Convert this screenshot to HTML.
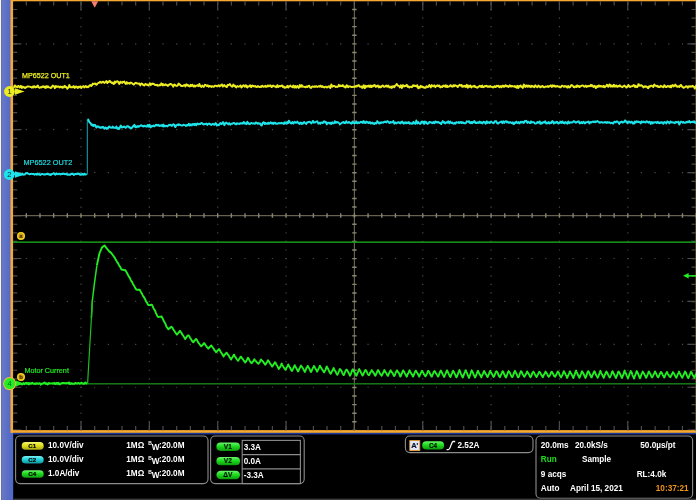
<!DOCTYPE html>
<html><head><meta charset="utf-8"><title>Oscilloscope</title>
<style>
html,body{margin:0;padding:0;background:#000;}
body{width:696px;height:500px;overflow:hidden;position:relative;font-family:"Liberation Sans",sans-serif;}
svg{position:absolute;left:0;top:0;display:block}
text{font-family:"Liberation Sans",sans-serif;}
.b{font-weight:bold;font-size:8.2px;fill:#fff}
</style></head>
<body>
<svg width="696" height="500" viewBox="0 0 696 500">
<defs>
<linearGradient id="blu" x1="0" x2="1" y1="0" y2="0"><stop offset="0" stop-color="#6a7ac6"/><stop offset="0.5" stop-color="#5a6ec4"/><stop offset="1" stop-color="#4f68c8"/></linearGradient>
<linearGradient id="gy" x1="0" x2="0" y1="0" y2="1"><stop offset="0" stop-color="#f4f46a"/><stop offset="0.45" stop-color="#dede1c"/><stop offset="1" stop-color="#a8a810"/></linearGradient>
<linearGradient id="gc" x1="0" x2="0" y1="0" y2="1"><stop offset="0" stop-color="#7cf0f4"/><stop offset="0.45" stop-color="#22d4dc"/><stop offset="1" stop-color="#10949c"/></linearGradient>
<linearGradient id="gg" x1="0" x2="0" y1="0" y2="1"><stop offset="0" stop-color="#6cf46c"/><stop offset="0.45" stop-color="#1edc1e"/><stop offset="1" stop-color="#0e9a0e"/></linearGradient>
<filter id="soft" filterUnits="userSpaceOnUse" x="-10" y="-10" width="716" height="520"><feGaussianBlur stdDeviation="0.35"/></filter>
<radialGradient id="cm"><stop offset="0" stop-color="#c08410"/><stop offset="0.55" stop-color="#d8a018"/><stop offset="0.8" stop-color="#f2d622"/><stop offset="1" stop-color="#f2d622"/></radialGradient>
</defs>
<g filter="url(#soft)">
<rect x="-6" y="-6" width="708" height="512" fill="#000"/>
<!-- left band -->
<rect x="-6" y="-6" width="7.4" height="512" fill="#f4f4fa"/>
<rect x="1.4" y="-6" width="11.8" height="512" fill="url(#blu)"/>
<!-- plot frame -->
<rect x="10.5" y="-6" width="692" height="438.9" fill="#f6a832"/>
<rect x="13.1" y="1.3" width="689" height="428.8" fill="#000"/>
<rect x="695" y="1.3" width="7" height="428.9" fill="#4a3208"/>
<rect x="13.2" y="432.9" width="689" height="1.5" fill="#1c3aa0"/>
<g stroke="#4a4a4a" stroke-width="1.2"><line x1="81" y1="8.89" x2="81" y2="430" stroke-dasharray="1.2 7.39"/><line x1="149.35" y1="8.89" x2="149.35" y2="430" stroke-dasharray="1.2 7.39"/><line x1="217.7" y1="8.89" x2="217.7" y2="430" stroke-dasharray="1.2 7.39"/><line x1="286.05" y1="8.89" x2="286.05" y2="430" stroke-dasharray="1.2 7.39"/><line x1="422.75" y1="8.89" x2="422.75" y2="430" stroke-dasharray="1.2 7.39"/><line x1="491.1" y1="8.89" x2="491.1" y2="430" stroke-dasharray="1.2 7.39"/><line x1="559.45" y1="8.89" x2="559.45" y2="430" stroke-dasharray="1.2 7.39"/><line x1="627.8" y1="8.89" x2="627.8" y2="430" stroke-dasharray="1.2 7.39"/><line x1="25.72" y1="43.83" x2="696" y2="43.83" stroke-dasharray="1.2 12.47"/><line x1="25.72" y1="86.76" x2="696" y2="86.76" stroke-dasharray="1.2 12.47"/><line x1="25.72" y1="129.69" x2="696" y2="129.69" stroke-dasharray="1.2 12.47"/><line x1="25.72" y1="172.62" x2="696" y2="172.62" stroke-dasharray="1.2 12.47"/><line x1="25.72" y1="258.48" x2="696" y2="258.48" stroke-dasharray="1.2 12.47"/><line x1="25.72" y1="301.41" x2="696" y2="301.41" stroke-dasharray="1.2 12.47"/><line x1="25.72" y1="344.34" x2="696" y2="344.34" stroke-dasharray="1.2 12.47"/><line x1="25.72" y1="387.27" x2="696" y2="387.27" stroke-dasharray="1.2 12.47"/></g>
<g stroke="#4c4c4e"><line x1="25.72" y1="3.4" x2="696" y2="3.4" stroke-width="4.4" stroke-dasharray="1.2 12.47"/><line x1="25.72" y1="428.1" x2="696" y2="428.1" stroke-width="4.4" stroke-dasharray="1.2 12.47"/><line x1="80.4" y1="5.9" x2="696" y2="5.9" stroke-width="9.4" stroke-dasharray="1.2 67.15"/><line x1="80.4" y1="425.6" x2="696" y2="425.6" stroke-width="9.4" stroke-dasharray="1.2 67.15"/><line x1="15.1" y1="8.89" x2="15.1" y2="430" stroke-width="4.2" stroke-dasharray="1.2 7.39"/><line x1="693.8" y1="8.89" x2="693.8" y2="430" stroke-width="4.4" stroke-dasharray="1.2 7.39"/><line x1="17.2" y1="43.23" x2="17.2" y2="430" stroke-width="8.4" stroke-dasharray="1.2 41.73"/><line x1="691.7" y1="43.23" x2="691.7" y2="430" stroke-width="8.6" stroke-dasharray="1.2 41.73"/></g>
<g stroke="#66624f"><line x1="13" y1="215.55" x2="696" y2="215.55" stroke-width="1.2"/><line x1="354.4" y1="1" x2="354.4" y2="430.3" stroke-width="1.2"/><line x1="25.62" y1="215.55" x2="696" y2="215.55" stroke="#8a8672" stroke-width="4.4" stroke-dasharray="1.4 12.27"/><line x1="354.4" y1="8.79" x2="354.4" y2="430" stroke="#8a8672" stroke-width="4.4" stroke-dasharray="1.4 7.19"/></g>
<rect x="13" y="241.4" width="689" height="1.5" fill="#189a1b"/>
<rect x="13" y="383.1" width="689" height="1.4" fill="#14801a"/>
<polyline fill="none" stroke="#ecec22" stroke-width="1.9" stroke-linejoin="round" points="13.3,87.8 13.8,87.6 14.3,86.5 14.8,85.4 15.3,85.6 15.8,86.7 16.3,86.5 16.8,86.8 17.3,87.3 17.8,86.6 18.3,85.9 18.8,86.2 19.3,87 19.8,87.5 20.3,86.5 20.8,85.7 21.3,86.7 21.8,88 22.3,87.7 22.8,86.6 23.3,87.1 23.8,87.3 24.3,87.1 24.8,88 25.3,88 25.8,87.2 26.3,87.3 26.8,86.9 27.3,86.5 27.8,86.5 28.3,86.5 28.8,86.6 29.3,86.6 29.8,86.6 30.3,86.8 30.8,87 31.3,87.1 31.8,87.7 32.3,86.8 32.8,86.8 33.3,87.4 33.8,86.2 34.3,86.2 34.8,86.9 35.3,87.5 35.8,86.9 36.3,86.5 36.8,87.1 37.3,86.1 37.8,85.5 38.3,86.6 38.8,87.5 39.3,87.8 39.8,87.7 40.3,87.4 40.8,87.2 41.3,87.5 41.8,87.1 42.3,86.4 42.8,87 43.3,86.3 43.8,86.8 44.3,87.2 44.8,86.5 45.3,87.9 45.8,87.5 46.3,86.2 46.8,87.4 47.3,87.1 47.8,86.2 48.3,86.9 48.8,87.4 49.3,87.4 49.8,87.4 50.3,87.7 50.8,88.1 51.3,87.7 51.8,86.9 52.3,86.2 52.8,85.6 53.3,86.3 53.8,86.3 54.3,86.4 54.8,88.2 55.3,87.3 55.8,86 56.3,86.3 56.8,87.1 57.3,86.9 57.8,86.4 58.3,86.6 58.8,86.5 59.3,87.4 59.8,87.1 60.3,86.5 60.8,87.1 61.3,87.5 61.8,86.7 62.3,86.8 62.8,87.7 63.3,87.5 63.8,87.4 64.3,86.1 64.8,85.8 65.3,87 65.8,87.3 66.3,86.9 66.8,87.7 67.3,88.8 67.8,88 68.3,87.8 68.8,86.9 69.3,84.9 69.8,86.3 70.3,87.2 70.8,87.1 71.3,87.4 71.8,87.1 72.3,87.2 72.8,87.3 73.3,86.2 73.8,86.3 74.3,87.1 74.8,87.9 75.3,87.2 75.8,86.4 76.3,86.7 76.8,86.6 77.3,87.6 77.8,87.9 78.3,86.9 78.8,86.7 79.3,87.3 79.8,86.8 80.3,86.3 80.8,87.5 81.3,88.1 81.8,87.3 82.3,86.6 82.8,86.6 83.3,86.1 83.8,86.6 84.3,87.5 84.8,87.1 85.3,86.3 85.8,85.9 86.3,86.8 86.8,87.3 87.3,86.7 87.8,86.7 88.3,87.2 88.8,86.5 89.3,85.6 89.8,85.4 90.3,84.9 90.8,85.5 91.3,86 91.8,85.6 92.3,84.5 92.8,83.6 93.3,83.9 93.8,84 94.3,83.9 94.8,83.5 95.3,83.5 95.8,84.5 96.3,84.8 96.8,84.6 97.3,83.7 97.8,83.3 98.3,82.9 98.8,82.8 99.3,82.7 99.8,81.9 100.3,81.8 100.8,82.3 101.3,82.8 101.8,82.6 102.3,81.9 102.8,81.9 103.3,81.7 103.8,82.4 104.3,83 104.8,82.4 105.3,82.4 105.8,81.6 106.3,81 106.8,81.7 107.3,83.1 107.8,82.6 108.3,81.5 108.8,82.1 109.3,81.6 109.8,80.8 110.3,81.4 110.8,82.2 111.3,82.3 111.8,83 112.3,83.2 112.8,82.6 113.3,83.5 113.8,84.1 114.3,82.6 114.8,81.6 115.3,82.9 115.8,82.4 116.3,81.4 116.8,81.5 117.3,81.3 117.8,81.4 118.3,82.1 118.8,83.3 119.3,84 119.8,83.3 120.3,81.7 120.8,81.7 121.3,82.5 121.8,82.7 122.3,82.9 122.8,81.8 123.3,82.1 123.8,82 124.3,81.5 124.8,82.7 125.3,83.3 125.8,83.9 126.3,82.6 126.8,82.1 127.3,83.6 127.8,83.3 128.3,83.3 128.8,82.9 129.3,83 129.8,83.8 130.3,83.1 130.8,82.5 131.3,82.9 131.8,83 132.3,83.6 132.8,84 133.3,84.2 133.8,84.7 134.3,84.1 134.8,83.5 135.3,83 135.8,82.8 136.3,82.9 136.8,83.5 137.3,83.5 137.8,83.4 138.3,83.9 138.8,83.7 139.3,83.5 139.8,84.5 140.3,85.4 140.8,84.3 141.3,83.5 141.8,83.7 142.3,83.7 142.8,84.7 143.3,85.1 143.8,85 144.3,85.6 144.8,84.8 145.3,83.9 145.8,84.1 146.3,84.7 146.8,84.7 147.3,84.5 147.8,85.2 148.3,85.5 148.8,85.1 149.3,84.2 149.8,83.2 150.3,84.2 150.8,85.2 151.3,84.2 151.8,83.8 152.3,84 152.8,83.5 153.3,83.9 153.8,84.3 154.3,84.1 154.8,84.9 155.3,85 155.8,84.9 156.3,85.2 156.8,85 157.3,84.8 157.8,85.7 158.3,85.6 158.8,85.6 159.3,85.2 159.8,84.8 160.3,85.3 160.8,84.6 161.3,83.3 161.8,84.4 162.3,85.2 162.8,83.9 163.3,84.6 163.8,85.1 164.3,85.2 164.8,85 165.3,84.2 165.8,84.7 166.3,85 166.8,84.7 167.3,85.5 167.8,85.9 168.3,85.6 168.8,84.8 169.3,84.8 169.8,84.1 170.3,83.9 170.8,84.3 171.3,84.1 171.8,84.7 172.3,85.1 172.8,85.8 173.3,86.7 173.8,85 174.3,84.4 174.8,84.8 175.3,85 175.8,85.6 176.3,85.8 176.8,85.9 177.3,85.8 177.8,85.5 178.3,83.9 178.8,83.5 179.3,84.3 179.8,84.7 180.3,84.6 180.8,85.7 181.3,86.1 181.8,85.9 182.3,85.9 182.8,86.1 183.3,85.6 183.8,85.1 184.3,85.1 184.8,85 185.3,86.5 185.8,85.5 186.3,84.3 186.8,85.2 187.3,85.5 187.8,84.8 188.3,85.4 188.8,86.1 189.3,86.2 189.8,86.4 190.3,85.2 190.8,84.8 191.3,86 191.8,85.6 192.3,84.7 192.8,85.7 193.3,86.4 193.8,86.6 194.3,85.4 194.8,86 195.3,86.6 195.8,85.6 196.3,85.7 196.8,85.6 197.3,85.2 197.8,85.1 198.3,86.2 198.8,85.8 199.3,83.9 199.8,84.9 200.3,86.2 200.8,86.3 201.3,87 201.8,86.3 202.3,85.6 202.8,86.2 203.3,86.7 203.8,86.9 204.3,85.9 204.8,84.8 205.3,85.1 205.8,85 206.3,85.6 206.8,86.2 207.3,85.5 207.8,85.3 208.3,86.2 208.8,86.8 209.3,85.9 209.8,86 210.3,86.2 210.8,86.2 211.3,86.9 211.8,86.5 212.3,86.1 212.8,86.4 213.3,86.7 213.8,86.8 214.3,86.3 214.8,85.7 215.3,85.8 215.8,85.6 216.3,85.8 216.8,86.4 217.3,86.3 217.8,86 218.3,85.4 218.8,85.2 219.3,86.1 219.8,86.5 220.3,85.8 220.8,85.1 221.3,85.2 221.8,84.4 222.3,85 222.8,86.6 223.3,86 223.8,85.4 224.3,84.9 224.8,85.9 225.3,86.3 225.8,86.2 226.3,86.9 226.8,87.1 227.3,85.5 227.8,84.7 228.3,85.1 228.8,85.2 229.3,84.7 229.8,84.1 230.3,84.8 230.8,85.5 231.3,86.1 231.8,86.3 232.3,86.7 232.8,86 233.3,84.6 233.8,85.7 234.3,86.2 234.8,85.6 235.3,86.1 235.8,87.1 236.3,87.4 236.8,86.7 237.3,86.1 237.8,86.4 238.3,86.4 238.8,86.8 239.3,86.5 239.8,86.2 240.3,85.4 240.8,85.6 241.3,87.5 241.8,87.1 242.3,86.8 242.8,86 243.3,85.3 243.8,85.4 244.3,85.7 244.8,86.7 245.3,85.9 245.8,85.2 246.3,85.6 246.8,87.2 247.3,87.5 247.8,86.3 248.3,86.5 248.8,86.6 249.3,86.3 249.8,85.5 250.3,85.3 250.8,86.8 251.3,87.2 251.8,86.3 252.3,85.5 252.8,85.6 253.3,86.3 253.8,86 254.3,86.4 254.8,86.5 255.3,86 255.8,86.7 256.3,86.8 256.8,87 257.3,86.8 257.8,86 258.3,86.3 258.8,86.7 259.3,87 259.8,87.1 260.3,86.5 260.8,86.5 261.3,86.9 261.8,86.1 262.3,85.7 262.8,86.1 263.3,86.8 263.8,86.7 264.3,86.6 264.8,86.2 265.3,85.7 265.8,86.8 266.3,86.7 266.8,86.8 267.3,85.9 267.8,85.4 268.3,86.4 268.8,86.4 269.3,85.6 269.8,85.9 270.3,85.5 270.8,85.7 271.3,87 271.8,87 272.3,86.7 272.8,85.7 273.3,85.6 273.8,85.9 274.3,86.4 274.8,86.5 275.3,86.4 275.8,86.8 276.3,87.3 276.8,86.1 277.3,85.2 277.8,86.5 278.3,87 278.8,86.4 279.3,86 279.8,86.2 280.3,86.4 280.8,86.2 281.3,85.8 281.8,85.5 282.3,85.7 282.8,86.9 283.3,86.6 283.8,86.4 284.3,87.8 284.8,87.4 285.3,87.6 285.8,87.5 286.3,87.1 286.8,87.2 287.3,85.8 287.8,86 288.3,87.5 288.8,87 289.3,86.4 289.8,86.2 290.3,85.5 290.8,86.2 291.3,86.6 291.8,86.6 292.3,87.3 292.8,86.5 293.3,85.5 293.8,86.1 294.3,87.6 294.8,87.4 295.3,86 295.8,86.4 296.3,87.7 296.8,87.2 297.3,86 297.8,86.3 298.3,86.8 298.8,87.9 299.3,86.9 299.8,85 300.3,85.7 300.8,86.8 301.3,85.6 301.8,85.1 302.3,86.6 302.8,86.7 303.3,86.5 303.8,86.8 304.3,86.9 304.8,87 305.3,86.8 305.8,87.2 306.3,86.8 306.8,86.3 307.3,87.1 307.8,86.8 308.3,86 308.8,85.9 309.3,85.7 309.8,87 310.3,87.7 310.8,87.6 311.3,87.8 311.8,86.9 312.3,86.4 312.8,86.5 313.3,86.6 313.8,86.9 314.3,86.5 314.8,86.2 315.3,86.8 315.8,86.6 316.3,86.3 316.8,86.7 317.3,87 317.8,86.7 318.3,86.4 318.8,86.2 319.3,86.5 319.8,86.7 320.3,85.7 320.8,85.6 321.3,86.6 321.8,86.9 322.3,86.2 322.8,86.4 323.3,87.1 323.8,87.1 324.3,87.5 324.8,87.1 325.3,86.6 325.8,86.6 326.3,86.8 326.8,87.5 327.3,87.3 327.8,87.1 328.3,86.4 328.8,86.4 329.3,86.2 329.8,86.9 330.3,88.1 330.8,86.3 331.3,84.4 331.8,85.8 332.3,86.7 332.8,86.3 333.3,86.1 333.8,85.8 334.3,86.1 334.8,86.4 335.3,86.5 335.8,87 336.3,86.8 336.8,86.7 337.3,87 337.8,86.7 338.3,85.9 338.8,84.8 339.3,86.1 339.8,86.3 340.3,85.6 340.8,86.1 341.3,85.8 341.8,86.1 342.3,85.8 342.8,85.1 343.3,86.3 343.8,86.5 344.3,86.4 344.8,87.1 345.3,87.5 345.8,87.4 346.3,85.7 346.8,85.2 347.3,85.9 347.8,86.8 348.3,87.2 348.8,86.3 349.3,86.4 349.8,86.4 350.3,86.5 350.8,86.7 351.3,87 351.8,87.1 352.3,87 352.8,86.9 353.3,86.7 353.8,86.7 354.3,86.6 354.8,86.8 355.3,86.4 355.8,86.1 356.3,86 356.8,86.5 357.3,85.5 357.8,85.9 358.3,85.8 358.8,85.1 359.3,86.1 359.8,86.6 360.3,86.9 360.8,86.5 361.3,86.4 361.8,86.9 362.3,88 362.8,87.7 363.3,85.6 363.8,85.2 364.3,86.4 364.8,88.2 365.3,87.6 365.8,85.8 366.3,86.5 366.8,86.8 367.3,85.9 367.8,86.2 368.3,86.2 368.8,85.6 369.3,86.9 369.8,86.4 370.3,85.6 370.8,87 371.3,87.1 371.8,85.7 372.3,85.6 372.8,86.5 373.3,86 373.8,85.3 374.3,85.4 374.8,85.1 375.3,86.4 375.8,87 376.3,86.1 376.8,86.4 377.3,86.2 377.8,85.4 378.3,86.4 378.8,87.4 379.3,86.4 379.8,86.3 380.3,87.4 380.8,87.3 381.3,86.9 381.8,86 382.3,85.7 382.8,85.4 383.3,86 383.8,86.8 384.3,86.9 384.8,86.6 385.3,86.4 385.8,86 386.3,85.4 386.8,86.4 387.3,86.8 387.8,86.5 388.3,85.5 388.8,86.2 389.3,87.3 389.8,87.3 390.3,87.5 390.8,86.7 391.3,86.4 391.8,87.9 392.3,87.3 392.8,86.2 393.3,86.3 393.8,87 394.3,87.3 394.8,85.9 395.3,85.6 395.8,85.4 396.3,84.6 396.8,83.9 397.3,84.7 397.8,85.5 398.3,85.9 398.8,86 399.3,86.1 399.8,87.4 400.3,86.7 400.8,85.2 401.3,86.3 401.8,88 402.3,87.1 402.8,85.1 403.3,85.4 403.8,86 404.3,86.5 404.8,86.2 405.3,85.7 405.8,86.1 406.3,85.4 406.8,84.8 407.3,85.8 407.8,86.9 408.3,86.2 408.8,86.7 409.3,87.6 409.8,87.1 410.3,86.9 410.8,86.8 411.3,86.9 411.8,87.2 412.3,86.8 412.8,85.4 413.3,85.3 413.8,85.9 414.3,85.4 414.8,86.1 415.3,85.8 415.8,85.9 416.3,86.5 416.8,85.4 417.3,85.3 417.8,87.1 418.3,88.3 418.8,87 419.3,86.8 419.8,87.8 420.3,86.8 420.8,85.8 421.3,86.7 421.8,87 422.3,86.4 422.8,87 423.3,87.4 423.8,87 424.3,87.9 424.8,87.8 425.3,87.9 425.8,87.8 426.3,86.4 426.8,86.3 427.3,86.9 427.8,87.1 428.3,86.9 428.8,85.8 429.3,85.1 429.8,85.7 430.3,86.6 430.8,87.4 431.3,85.9 431.8,85.1 432.3,86.1 432.8,86.1 433.3,86.4 433.8,86 434.3,85.3 434.8,86.2 435.3,87.2 435.8,86.5 436.3,86.1 436.8,85.9 437.3,85.3 437.8,86 438.3,86.3 438.8,85.5 439.3,85.5 439.8,86.9 440.3,87.4 440.8,86.7 441.3,86.5 441.8,86.8 442.3,87.1 442.8,86.1 443.3,85.6 443.8,85.9 444.3,86.1 444.8,86.4 445.3,85.3 445.8,85.9 446.3,87 446.8,85.6 447.3,86 447.8,87 448.3,86.6 448.8,86.6 449.3,86.4 449.8,86.2 450.3,85.2 450.8,85.2 451.3,86.1 451.8,86.4 452.3,86.7 452.8,86.6 453.3,85.2 453.8,85.6 454.3,86.3 454.8,85.2 455.3,85.5 455.8,85.5 456.3,85.8 456.8,86 457.3,86.8 457.8,87.1 458.3,85.9 458.8,85.7 459.3,84.9 459.8,84.8 460.3,85.5 460.8,85.7 461.3,85 461.8,85.2 462.3,86.9 462.8,86.7 463.3,86.1 463.8,86.5 464.3,86.1 464.8,85.7 465.3,86.6 465.8,86.9 466.3,85.8 466.8,84.8 467.3,86.6 467.8,87.7 468.3,85.7 468.8,85.6 469.3,86.7 469.8,86.7 470.3,85.4 470.8,86.3 471.3,87.5 471.8,86.5 472.3,86.6 472.8,86.6 473.3,86.1 473.8,86.6 474.3,85.8 474.8,85.9 475.3,87 475.8,86.9 476.3,87.2 476.8,87.6 477.3,87.8 477.8,87.5 478.3,86.6 478.8,86.5 479.3,86.5 479.8,85.7 480.3,86.1 480.8,86.8 481.3,87.1 481.8,85.9 482.3,85.6 482.8,87 483.3,86.8 483.8,87.2 484.3,86.7 484.8,86.1 485.3,86.4 485.8,86.2 486.3,85.9 486.8,85.8 487.3,86.7 487.8,86.8 488.3,86.6 488.8,86.2 489.3,86.8 489.8,86.8 490.3,86.1 490.8,86.7 491.3,86.6 491.8,86.7 492.3,86.9 492.8,87.3 493.3,87.5 493.8,86.9 494.3,86.2 494.8,86.2 495.3,87.1 495.8,87.1 496.3,86.1 496.8,85.7 497.3,86 497.8,86.3 498.3,85.7 498.8,86.6 499.3,87.3 499.8,86.4 500.3,86.2 500.8,86.1 501.3,87.3 501.8,86.9 502.3,85.7 502.8,85.6 503.3,85.6 503.8,86.9 504.3,86.8 504.8,85.8 505.3,85.3 505.8,85.3 506.3,86.3 506.8,86.2 507.3,85.9 507.8,86.6 508.3,87 508.8,86.6 509.3,85.9 509.8,85.2 510.3,86.5 510.8,86.4 511.3,85.9 511.8,86.6 512.3,85.9 512.8,86.4 513.3,86.4 513.8,86.6 514.3,86.5 514.8,86.1 515.3,87.2 515.8,86.5 516.3,86.9 516.8,87.8 517.3,85.7 517.8,86 518.3,88 518.8,87.2 519.3,86.1 519.8,86.5 520.3,85.6 520.8,85.5 521.3,86.9 521.8,86.6 522.3,86.6 522.8,88 523.3,86.5 523.8,84.5 524.3,85.1 524.8,86.3 525.3,86.9 525.8,86.1 526.3,85.4 526.8,85.4 527.3,86.8 527.8,86.7 528.3,85.6 528.8,86.5 529.3,86.7 529.8,85.7 530.3,86.6 530.8,87.2 531.3,86.2 531.8,85.8 532.3,86.6 532.8,86.6 533.3,86.3 533.8,86.9 534.3,87.3 534.8,86 535.3,85.2 535.8,86 536.3,86.3 536.8,86.8 537.3,87.3 537.8,86.7 538.3,85.6 538.8,85.9 539.3,86.2 539.8,86.9 540.3,87.4 540.8,86.6 541.3,86.9 541.8,86.6 542.3,85.9 542.8,86.1 543.3,86.6 543.8,87.3 544.3,87.4 544.8,87.2 545.3,86.7 545.8,86.5 546.3,86.5 546.8,86.8 547.3,86.7 547.8,86.1 548.3,86.5 548.8,86.9 549.3,86.4 549.8,85.9 550.3,85.9 550.8,85.3 551.3,86.3 551.8,87.1 552.3,85.9 552.8,85.2 553.3,86.2 553.8,86.4 554.3,85.6 554.8,86.5 555.3,86.8 555.8,86 556.3,86.5 556.8,86.3 557.3,86 557.8,86.5 558.3,86.8 558.8,86.4 559.3,86.5 559.8,87.1 560.3,87.4 560.8,87.4 561.3,86.2 561.8,85.9 562.3,85.6 562.8,85.8 563.3,86.3 563.8,86.8 564.3,86.8 564.8,86 565.3,86.4 565.8,86.6 566.3,86.3 566.8,87.2 567.3,87.7 567.8,86.6 568.3,85.9 568.8,87 569.3,87.5 569.8,87.1 570.3,87 570.8,85.7 571.3,85.1 571.8,85.5 572.3,85.3 572.8,85.8 573.3,86.4 573.8,87.1 574.3,87.3 574.8,86.8 575.3,86.3 575.8,86.8 576.3,87.1 576.8,85.6 577.3,85.4 577.8,86.5 578.3,86.1 578.8,85.9 579.3,87.1 579.8,86.9 580.3,86.1 580.8,86.2 581.3,85.8 581.8,85.6 582.3,85.5 582.8,85.6 583.3,85.7 583.8,86.3 584.3,86.7 584.8,86.6 585.3,86.1 585.8,85.6 586.3,86.5 586.8,86.9 587.3,86.3 587.8,85.9 588.3,86.3 588.8,86.1 589.3,85.9 589.8,86.3 590.3,85.9 590.8,84.8 591.3,85.1 591.8,86.2 592.3,85.3 592.8,85.8 593.3,87 593.8,86.6 594.3,86.1 594.8,85.8 595.3,87.1 595.8,88.1 596.3,87.5 596.8,86.4 597.3,86.1 597.8,86.9 598.3,86.6 598.8,85.5 599.3,85.7 599.8,86.6 600.3,86.2 600.8,85.9 601.3,86.6 601.8,86.5 602.3,86.2 602.8,86.6 603.3,87 603.8,85.8 604.3,86.3 604.8,87.3 605.3,86.6 605.8,86.2 606.3,85.9 606.8,84.8 607.3,84.9 607.8,86.4 608.3,86.8 608.8,86.2 609.3,84.7 609.8,84.5 610.3,85.5 610.8,86.7 611.3,86 611.8,85.4 612.3,86.5 612.8,86.8 613.3,86.5 613.8,84.8 614.3,85.1 614.8,86.6 615.3,86.5 615.8,86 616.3,85.5 616.8,86.7 617.3,86.9 617.8,86.2 618.3,85.9 618.8,86.5 619.3,86 619.8,85.2 620.3,86.2 620.8,86.4 621.3,86.7 621.8,86.9 622.3,87.2 622.8,86.8 623.3,86.1 623.8,86.3 624.3,85.5 624.8,86.1 625.3,86.5 625.8,86.4 626.3,87.5 626.8,87.5 627.3,86.9 627.8,86.1 628.3,84.9 628.8,85.5 629.3,86.4 629.8,87 630.3,87 630.8,86.4 631.3,86.4 631.8,86.3 632.3,86.3 632.8,86 633.3,85.3 633.8,85 634.3,85.9 634.8,86.8 635.3,87 635.8,85.8 636.3,86.5 636.8,87.2 637.3,87 637.8,86.4 638.3,84.2 638.8,84.3 639.3,85.4 639.8,85.9 640.3,85.7 640.8,85.1 641.3,85.2 641.8,85.7 642.3,85.9 642.8,86.5 643.3,87.4 643.8,87.1 644.3,86.6 644.8,86.3 645.3,86.8 645.8,86.3 646.3,86.5 646.8,86.9 647.3,86.9 647.8,88 648.3,88.2 648.8,86.5 649.3,86.4 649.8,86.8 650.3,85.9 650.8,86 651.3,85.6 651.8,85.8 652.3,86.1 652.8,86.5 653.3,87 653.8,85.2 654.3,84.5 654.8,85.3 655.3,85.5 655.8,85.6 656.3,86.1 656.8,86.3 657.3,85.7 657.8,86 658.3,87 658.8,86.8 659.3,86.9 659.8,87.1 660.3,86.2 660.8,85.8 661.3,86.1 661.8,86.6 662.3,86.6 662.8,86.9 663.3,87.3 663.8,86.4 664.3,85.2 664.8,85.7 665.3,86.5 665.8,87 666.3,87.1 666.8,86.9 667.3,86.1 667.8,86 668.3,86.2 668.8,86.2 669.3,86.9 669.8,86.4 670.3,85.8 670.8,87.4 671.3,87.1 671.8,85.7 672.3,85.5 672.8,85.1 673.3,86.1 673.8,86.5 674.3,85.7 674.8,85.6 675.3,84.5 675.8,85.3 676.3,86.4 676.8,86 677.3,86.9 677.8,86.9 678.3,86.3 678.8,86.4 679.3,87 679.8,86.3 680.3,85.4 680.8,84.9 681.3,85.2 681.8,86.6 682.3,86.4 682.8,87.1 683.3,87.8 683.8,87.8 684.3,87.4 684.8,87.3 685.3,87 685.8,86.3 686.3,86.6 686.8,86.2 687.3,86.9 687.8,87.8 688.3,86.7 688.8,86.3 689.3,86.7 689.8,86.5 690.3,86.7 690.8,86.4 691.3,86.2 691.8,86.6 692.3,86.2 692.8,85.8 693.3,86.5 693.8,86.8 694.3,87.5 694.8,88.6 695.3,87.1 695.8,86.2 696.3,85.5 696.8,85"/>
<polyline fill="none" stroke="#16a8b0" stroke-width="1" points="87.3,174.5 87.3,119.8"/>
<polyline fill="none" stroke="#1fe4ea" stroke-width="1.9" stroke-linejoin="round" points="13.3,174.3 13.8,174.1 14.3,174.1 14.8,173.8 15.3,173.9 15.8,174 16.3,173.8 16.8,174.2 17.3,173.9 17.8,174.8 18.3,174.9 18.8,174.2 19.3,174.7 19.8,174.2 20.3,174.2 20.8,174.6 21.3,174.5 21.8,174.2 22.3,173.6 22.8,174.3 23.3,174.7 23.8,174.4 24.3,174.4 24.8,174.5 25.3,174 25.8,173.2 26.3,173.1 26.8,173.2 27.3,173 27.8,173.4 28.3,173.9 28.8,174 29.3,174.3 29.8,174.2 30.3,174 30.8,174.1 31.3,173.9 31.8,173.7 32.3,174 32.8,174 33.3,173.8 33.8,174 34.3,174.6 34.8,174.7 35.3,174.2 35.8,173.9 36.3,174 36.8,174.8 37.3,173.9 37.8,173.4 38.3,174.4 38.8,174.5 39.3,174.1 39.8,174.5 40.3,175.1 40.8,174.5 41.3,174.2 41.8,174 42.3,174 42.8,174.2 43.3,174.4 43.8,174.6 44.3,174.3 44.8,174.4 45.3,174.6 45.8,174.4 46.3,173.8 46.8,174.1 47.3,174.2 47.8,173.6 48.3,173.9 48.8,174.3 49.3,174.8 49.8,174.1 50.3,174.1 50.8,175.1 51.3,174.5 51.8,174 52.3,174 52.8,173.9 53.3,173.6 53.8,173.3 54.3,173.6 54.8,174.2 55.3,174.8 55.8,174.4 56.3,173.3 56.8,173.6 57.3,174.1 57.8,174.2 58.3,174.2 58.8,173.7 59.3,173.6 59.8,174.2 60.3,174.5 60.8,174 61.3,174.2 61.8,174 62.3,173.6 62.8,174.1 63.3,173.9 63.8,173.5 64.3,173.9 64.8,174.2 65.3,174.1 65.8,174 66.3,173.7 66.8,173.6 67.3,174.9 67.8,174.9 68.3,174.5 68.8,174.5 69.3,174.4 69.8,175 70.3,174.7 70.8,174.1 71.3,173.6 71.8,174.1 72.3,174.1 72.8,173.5 73.3,174.3 73.8,175.1 74.3,174.6 74.8,174.1 75.3,173.9 75.8,174.1 76.3,174.2 76.8,173.6 77.3,173.5 77.8,174 78.3,173.8 78.8,173.4 79.3,173.9 79.8,174.7 80.3,174.7 80.8,174.3 81.3,174.8 81.8,174.5 82.3,173.7 82.8,174.2 83.3,174.8 83.8,174.6 84.3,173.6 84.8,173.6 85.3,174.6 85.8,174.4 86.3,174.4 86.8,174.8"/>
<polyline fill="none" stroke="#1fe4ea" stroke-width="1.9" stroke-linejoin="round" points="87.3,119.8 87.8,119.9 88.3,119.6 88.8,120.8 89.3,122.1 89.8,122.6 90.3,122.9 90.8,123.6 91.3,124.8 91.8,125.2 92.3,124.5 92.8,125.1 93.3,126.1 93.8,124.7 94.3,125.2 94.8,125.7 95.3,125 95.8,126.6 96.3,127.6 96.8,126.9 97.3,126.2 97.8,126.8 98.3,126.5 98.8,126.6 99.3,127.4 99.8,127.7 100.3,127.9 100.8,127.1 101.3,127.3 101.8,127.8 102.3,127.1 102.8,126.8 103.3,127.1 103.8,127.8 104.3,128.7 104.8,128.6 105.3,127.6 105.8,127.4 106.3,128.3 106.8,129 107.3,128.2 107.8,127.8 108.3,128 108.8,126.8 109.3,126.4 109.8,127.1 110.3,127.5 110.8,127.5 111.3,127.4 111.8,127.8 112.3,127.6 112.8,126.6 113.3,127.3 113.8,127.8 114.3,127.9 114.8,127.7 115.3,128 115.8,127.7 116.3,126.5 116.8,127.4 117.3,128.8 117.8,128.1 118.3,128 118.8,129.1 119.3,128.7 119.8,127.8 120.3,126.3 120.8,125.6 121.3,126.3 121.8,127.3 122.3,127.5 122.8,126.9 123.3,127.1 123.8,126.5 124.3,126.7 124.8,127 125.3,127.4 125.8,127.9 126.3,126.9 126.8,126.5 127.3,126.1 127.8,126.4 128.3,126.7 128.8,126.5 129.3,127.5 129.8,127.7 130.3,127.4 130.8,128.5 131.3,128.6 131.8,127.8 132.3,127.3 132.8,126.2 133.3,126.4 133.8,126.4 134.3,124.7 134.8,125.6 135.3,127.2 135.8,126.3 136.3,126.8 136.8,127.2 137.3,126.4 137.8,125.9 138.3,126.7 138.8,126.9 139.3,126.1 139.8,126 140.3,125.9 140.8,125.2 141.3,125.2 141.8,125.6 142.3,126.3 142.8,126.1 143.3,126 143.8,126.4 144.3,125.6 144.8,125.8 145.3,126.2 145.8,126.3 146.3,126.5 146.8,126.5 147.3,125.5 147.8,125 148.3,126.5 148.8,126.8 149.3,124.8 149.8,124.9 150.3,126.9 150.8,127.4 151.3,126.5 151.8,126 152.3,126.3 152.8,126.1 153.3,125.5 153.8,126.4 154.3,126.4 154.8,126.1 155.3,125.5 155.8,124.6 156.3,124.7 156.8,125.3 157.3,125.5 157.8,125 158.3,124.8 158.8,125.2 159.3,126.1 159.8,125.7 160.3,125.5 160.8,125.8 161.3,125.1 161.8,125.3 162.3,126.3 162.8,124.8 163.3,124.5 163.8,126.6 164.3,126.1 164.8,125.6 165.3,126.2 165.8,126.1 166.3,125.7 166.8,126.1 167.3,126.5 167.8,125.9 168.3,125.7 168.8,125.1 169.3,124.7 169.8,125.2 170.3,125.2 170.8,124.8 171.3,125.5 171.8,125.9 172.3,125.7 172.8,124.8 173.3,124.2 173.8,124.5 174.3,124.6 174.8,125.8 175.3,127.1 175.8,126.4 176.3,125.3 176.8,125.1 177.3,124.6 177.8,125.1 178.3,125.2 178.8,124.2 179.3,124.7 179.8,125.1 180.3,125 180.8,125.2 181.3,125.5 181.8,125.6 182.3,125.6 182.8,125.2 183.3,124.7 183.8,124.9 184.3,125.1 184.8,125.1 185.3,125.2 185.8,126 186.3,125.7 186.8,124.9 187.3,125 187.8,125.4 188.3,125 188.8,123.7 189.3,124.6 189.8,125.6 190.3,125.1 190.8,124.3 191.3,124.8 191.8,125.4 192.3,124.5 192.8,124 193.3,124 193.8,124.9 194.3,125.1 194.8,123.9 195.3,123.7 195.8,124.7 196.3,125.3 196.8,124.4 197.3,123.5 197.8,123.5 198.3,124.2 198.8,124.3 199.3,123.8 199.8,124 200.3,124 200.8,123.5 201.3,123 201.8,123.1 202.3,123.4 202.8,124 203.3,124.4 203.8,123.9 204.3,124.3 204.8,124.1 205.3,124.1 205.8,124.1 206.3,123.4 206.8,124.4 207.3,125 207.8,124.2 208.3,123.8 208.8,123.6 209.3,123.5 209.8,124.2 210.3,124 210.8,124.5 211.3,125 211.8,124.6 212.3,124.1 212.8,123.7 213.3,124.1 213.8,124.6 214.3,124.8 214.8,124.2 215.3,123.4 215.8,123 216.3,124.4 216.8,125.6 217.3,125.2 217.8,124.6 218.3,124.9 218.8,125.2 219.3,124.3 219.8,123.8 220.3,123 220.8,123.5 221.3,124.3 221.8,123.9 222.3,123.2 222.8,122.2 223.3,122.3 223.8,123.7 224.3,125.2 224.8,124.4 225.3,123.3 225.8,122.9 226.3,122.5 226.8,123.4 227.3,123.5 227.8,123.4 228.3,124.4 228.8,124.2 229.3,123.1 229.8,124 230.3,124.8 230.8,124.1 231.3,123.9 231.8,123.7 232.3,123.9 232.8,123.3 233.3,123 233.8,123.1 234.3,123 234.8,123.9 235.3,123.8 235.8,124.4 236.3,124.4 236.8,123.2 237.3,123.4 237.8,123.8 238.3,123.8 238.8,123.7 239.3,123.5 239.8,123.9 240.3,123.2 240.8,123.1 241.3,123.6 241.8,123.2 242.3,123 242.8,123.7 243.3,123.1 243.8,121.9 244.3,122.7 244.8,123.6 245.3,123.1 245.8,123.1 246.3,124.2 246.8,123.5 247.3,121.7 247.8,122.5 248.3,123.7 248.8,123.3 249.3,123.9 249.8,124.3 250.3,123.5 250.8,123.2 251.3,123 251.8,123.2 252.3,123.5 252.8,123.6 253.3,123.3 253.8,123.1 254.3,123.6 254.8,123.8 255.3,123.6 255.8,122.4 256.3,122.6 256.8,123 257.3,123.2 257.8,123.8 258.3,123.3 258.8,123 259.3,123.8 259.8,123.8 260.3,123.6 260.8,124.7 261.3,125.6 261.8,125.5 262.3,123.9 262.8,122.8 263.3,122.4 263.8,122.2 264.3,123.2 264.8,124.1 265.3,122.9 265.8,123.1 266.3,123.7 266.8,123.8 267.3,123.9 267.8,122.9 268.3,122.8 268.8,123.8 269.3,123.7 269.8,123.3 270.3,122.7 270.8,122.3 271.3,122.9 271.8,123.6 272.3,123.3 272.8,122.7 273.3,124 273.8,123.7 274.3,122.6 274.8,122.6 275.3,122.7 275.8,123.5 276.3,123.9 276.8,123.7 277.3,123.9 277.8,123.7 278.3,123.4 278.8,122.9 279.3,123.1 279.8,123.3 280.3,123.4 280.8,123.2 281.3,122.7 281.8,123.3 282.3,123.3 282.8,123.1 283.3,123.7 283.8,124 284.3,122.6 284.8,122.2 285.3,123.4 285.8,123.2 286.3,123.4 286.8,123.7 287.3,121.9 287.8,122.5 288.3,123 288.8,120.7 289.3,121.1 289.8,122.3 290.3,122.4 290.8,123.3 291.3,123.6 291.8,123.2 292.3,122 292.8,122.7 293.3,123.6 293.8,122.9 294.3,122.1 294.8,121.8 295.3,122.6 295.8,122.8 296.3,122.8 296.8,122.4 297.3,121.5 297.8,122.1 298.3,122.9 298.8,123.3 299.3,124 299.8,123.4 300.3,122.5 300.8,123.2 301.3,123.9 301.8,122.8 302.3,123.3 302.8,123.8 303.3,122.8 303.8,122.1 304.3,122 304.8,122.9 305.3,123.2 305.8,123.6 306.3,123.9 306.8,122.8 307.3,122.2 307.8,122.5 308.3,122.2 308.8,122 309.3,121.9 309.8,121.8 310.3,122.2 310.8,122.9 311.3,123.5 311.8,122.9 312.3,122 312.8,120.9 313.3,121.1 313.8,122.7 314.3,122.5 314.8,122.5 315.3,122.3 315.8,121.9 316.3,121.6 316.8,121.5 317.3,121.2 317.8,122.4 318.3,123.7 318.8,123.1 319.3,122.7 319.8,123.4 320.3,123.7 320.8,122.6 321.3,122.4 321.8,122.9 322.3,123 322.8,123 323.3,122 323.8,121.5 324.3,121.3 324.8,121.9 325.3,122.6 325.8,121.8 326.3,123.1 326.8,124.4 327.3,123.1 327.8,122.8 328.3,122.8 328.8,122.8 329.3,123.5 329.8,122.8 330.3,122.7 330.8,123.8 331.3,124 331.8,122.6 332.3,122.3 332.8,123.3 333.3,123.2 333.8,123.4 334.3,122.9 334.8,121.2 335.3,122.3 335.8,122.9 336.3,122.1 336.8,121.9 337.3,122.4 337.8,122.6 338.3,122.3 338.8,122.8 339.3,123.4 339.8,124.4 340.3,124 340.8,123.6 341.3,123.3 341.8,122.9 342.3,122.4 342.8,122.5 343.3,122 343.8,122.1 344.3,123.1 344.8,122.7 345.3,123.2 345.8,122.3 346.3,121.2 346.8,122.4 347.3,122.7 347.8,122.7 348.3,122.8 348.8,121.9 349.3,122.2 349.8,122.9 350.3,122.9 350.8,123.1 351.3,123.8 351.8,123.1 352.3,121.8 352.8,123 353.3,122.9 353.8,122.2 354.3,123.2 354.8,123.3 355.3,123 355.8,122.8 356.3,121.6 356.8,122 357.3,123.3 357.8,123.2 358.3,122.5 358.8,122.4 359.3,123 359.8,122.7 360.3,122.1 360.8,121.8 361.3,122.2 361.8,122.1 362.3,121.7 362.8,122.9 363.3,122.2 363.8,121.1 364.3,122.6 364.8,122.8 365.3,123 365.8,122.5 366.3,121.5 366.8,122.6 367.3,122.6 367.8,122 368.3,122.4 368.8,123.1 369.3,122.6 369.8,122 370.3,123 370.8,123.6 371.3,123.2 371.8,123 372.3,122.6 372.8,123.2 373.3,123.8 373.8,123.2 374.3,123.9 374.8,123.6 375.3,122.8 375.8,123 376.3,123.6 376.8,122.6 377.3,121.1 377.8,122.1 378.3,122.8 378.8,122.5 379.3,123.6 379.8,123.5 380.3,122.4 380.8,123.1 381.3,122.8 381.8,122.2 382.3,122.5 382.8,122.5 383.3,122.8 383.8,122.1 384.3,121.7 384.8,122 385.3,121.6 385.8,122.1 386.3,122.4 386.8,121.6 387.3,121.1 387.8,121.4 388.3,121.7 388.8,122.1 389.3,123.1 389.8,122.7 390.3,121.9 390.8,121.9 391.3,122.6 391.8,122.4 392.3,122.4 392.8,122.4 393.3,121 393.8,122.1 394.3,123.7 394.8,122.8 395.3,122.4 395.8,122.6 396.3,123.4 396.8,123.1 397.3,122.5 397.8,122.5 398.3,122.1 398.8,122.4 399.3,123 399.8,122.5 400.3,123.4 400.8,122.3 401.3,121.8 401.8,122.7 402.3,121.6 402.8,122.5 403.3,123.3 403.8,123.7 404.3,122.5 404.8,122.9 405.3,123.1 405.8,122.2 406.3,123.4 406.8,123.3 407.3,122.6 407.8,123 408.3,123 408.8,122 409.3,122.6 409.8,123.7 410.3,123.5 410.8,123.1 411.3,123.4 411.8,123.7 412.3,123.8 412.8,123.5 413.3,121.9 413.8,122.1 414.3,123.4 414.8,123.4 415.3,123.9 415.8,122.7 416.3,120.5 416.8,121.7 417.3,123.5 417.8,123 418.3,122.1 418.8,122.9 419.3,123.3 419.8,123.5 420.3,123.9 420.8,123.4 421.3,121.9 421.8,121.6 422.3,122.5 422.8,121.6 423.3,121.8 423.8,123.8 424.3,123.7 424.8,121.4 425.3,122.3 425.8,122.7 426.3,122.1 426.8,123.4 427.3,123.9 427.8,123.4 428.3,123.5 428.8,123.1 429.3,121.9 429.8,121.9 430.3,122.3 430.8,122.3 431.3,122.5 431.8,122.7 432.3,123.3 432.8,122.7 433.3,122.1 433.8,122.5 434.3,123.3 434.8,123 435.3,121.4 435.8,122 436.3,122.4 436.8,121.7 437.3,122.1 437.8,122.6 438.3,121.9 438.8,122.3 439.3,123 439.8,122.9 440.3,123 440.8,123.9 441.3,124.1 441.8,122.5 442.3,122.1 442.8,121 443.3,122.2 443.8,122.7 444.3,122 444.8,123.1 445.3,123.4 445.8,122.9 446.3,122.2 446.8,122.5 447.3,122.8 447.8,121.7 448.3,121.3 448.8,122.4 449.3,123.3 449.8,121.8 450.3,121.5 450.8,122.6 451.3,122.9 451.8,123.1 452.3,122.5 452.8,122.9 453.3,123.6 453.8,123.7 454.3,123.2 454.8,122.8 455.3,123.7 455.8,123.4 456.3,122.2 456.8,122.4 457.3,122.4 457.8,122.6 458.3,122.7 458.8,122 459.3,123 459.8,122.7 460.3,122 460.8,122.7 461.3,123 461.8,122.1 462.3,122.4 462.8,123 463.3,122.6 463.8,123 464.3,123.4 464.8,123.1 465.3,123.2 465.8,123.2 466.3,122.1 466.8,121.3 467.3,121.5 467.8,121.6 468.3,121.9 468.8,121.2 469.3,121.4 469.8,122.9 470.3,123.2 470.8,122.9 471.3,121.9 471.8,123 472.3,123.2 472.8,121.9 473.3,122.3 473.8,121.8 474.3,121.1 474.8,121.8 475.3,123 475.8,122.8 476.3,122.5 476.8,123 477.3,122.9 477.8,122.2 478.3,122.6 478.8,122.9 479.3,121.9 479.8,121.5 480.3,122.4 480.8,123 481.3,122.2 481.8,122.7 482.3,123.4 482.8,122.9 483.3,121.9 483.8,121.8 484.3,122.6 484.8,122.2 485.3,123.3 485.8,123.7 486.3,121.9 486.8,121.2 487.3,122.2 487.8,123 488.3,122.4 488.8,122.1 489.3,122.5 489.8,123 490.3,122.1 490.8,121.7 491.3,121.6 491.8,122.1 492.3,122.7 492.8,122.9 493.3,123.2 493.8,123.2 494.3,122 494.8,121.2 495.3,121.5 495.8,121.2 496.3,121.3 496.8,122.6 497.3,123.4 497.8,123.6 498.3,123.5 498.8,123 499.3,122.6 499.8,122.1 500.3,122.1 500.8,121.9 501.3,121.4 501.8,121.9 502.3,123.2 502.8,122.6 503.3,121.3 503.8,122.4 504.3,122.9 504.8,121.6 505.3,121.5 505.8,121.2 506.3,121.4 506.8,122.4 507.3,121.6 507.8,121.9 508.3,122.3 508.8,122.9 509.3,122.8 509.8,122.3 510.3,122.2 510.8,122.2 511.3,123 511.8,123.2 512.3,123.4 512.8,122.3 513.3,122.8 513.8,124.2 514.3,123.3 514.8,122.6 515.3,123.1 515.8,122.1 516.3,121.6 516.8,122.6 517.3,122.9 517.8,123 518.3,122.1 518.8,122.4 519.3,123.4 519.8,123.1 520.3,122.4 520.8,121.6 521.3,121.8 521.8,122.6 522.3,122.1 522.8,121.7 523.3,122.5 523.8,122.9 524.3,122.2 524.8,121 525.3,121.3 525.8,121.4 526.3,120.8 526.8,122 527.3,122.9 527.8,121.9 528.3,121.7 528.8,122.2 529.3,122.6 529.8,123.1 530.3,123.1 530.8,121.5 531.3,121.4 531.8,122.4 532.3,122.2 532.8,122.3 533.3,122.3 533.8,122.1 534.3,122.7 534.8,123.4 535.3,123.6 535.8,123.6 536.3,123.3 536.8,123 537.3,122 537.8,122.3 538.3,122.8 538.8,122.2 539.3,121.6 539.8,121.4 540.3,123.7 540.8,123.8 541.3,122.7 541.8,123.4 542.3,123.3 542.8,122.4 543.3,122.1 543.8,122.6 544.3,122.5 544.8,121.6 545.3,121.3 545.8,122.7 546.3,123.6 546.8,123.2 547.3,123.3 547.8,123.1 548.3,122.1 548.8,123.1 549.3,123.4 549.8,122.5 550.3,122.7 550.8,123.2 551.3,123 551.8,121.7 552.3,121 552.8,121.3 553.3,122.4 553.8,123.6 554.3,123.1 554.8,122.2 555.3,122.7 555.8,122.9 556.3,122.2 556.8,121.7 557.3,122.1 557.8,123.1 558.3,123.6 558.8,123.4 559.3,122.6 559.8,122.8 560.3,122.1 560.8,121.6 561.3,123 561.8,122.4 562.3,121.4 562.8,122.6 563.3,123.1 563.8,122.3 564.3,123.1 564.8,123.5 565.3,122.2 565.8,122.1 566.3,122.6 566.8,123 567.3,123.8 567.8,122.4 568.3,121.4 568.8,123 569.3,123.3 569.8,122.6 570.3,122.2 570.8,122.5 571.3,122.5 571.8,122.3 572.3,122.6 572.8,122.2 573.3,121.5 573.8,121.1 574.3,121.4 574.8,121.8 575.3,122.4 575.8,122.7 576.3,122.5 576.8,122 577.3,121.7 577.8,121.9 578.3,121.5 578.8,121.2 579.3,122.7 579.8,123.4 580.3,123 580.8,123 581.3,122 581.8,122.6 582.3,123.3 582.8,122.6 583.3,121.8 583.8,121.9 584.3,122.8 584.8,123.4 585.3,123.1 585.8,122.4 586.3,122.1 586.8,122.4 587.3,122.2 587.8,122 588.3,121.4 588.8,122.1 589.3,123.5 589.8,122.7 590.3,122 590.8,122.4 591.3,122.6 591.8,122 592.3,121.8 592.8,121.9 593.3,121.6 593.8,122.2 594.3,121.9 594.8,121.5 595.3,122.3 595.8,121.4 596.3,121.7 596.8,121.6 597.3,121 597.8,121.5 598.3,121.7 598.8,121.9 599.3,122.6 599.8,122.8 600.3,122.2 600.8,122.2 601.3,122.4 601.8,122.1 602.3,122.3 602.8,122.7 603.3,122.6 603.8,122.5 604.3,122.3 604.8,122.3 605.3,122 605.8,122.1 606.3,122.9 606.8,122.5 607.3,122.1 607.8,122.7 608.3,122.6 608.8,122.1 609.3,122.3 609.8,122.5 610.3,123.2 610.8,123.2 611.3,122.9 611.8,122.8 612.3,122.8 612.8,123.5 613.3,123.6 613.8,122.4 614.3,121.7 614.8,121.8 615.3,121.8 615.8,122.4 616.3,121.8 616.8,121.3 617.3,121.4 617.8,121.9 618.3,122.4 618.8,123.1 619.3,123.9 619.8,122.8 620.3,121.9 620.8,122.3 621.3,122.1 621.8,121.5 622.3,121.9 622.8,122.7 623.3,122.1 623.8,122 624.3,121.9 624.8,120.5 625.3,120.5 625.8,121.7 626.3,121.5 626.8,121.7 627.3,123.2 627.8,123.2 628.3,122.2 628.8,121.5 629.3,121.6 629.8,122.2 630.3,122.8 630.8,122.5 631.3,121.6 631.8,121.6 632.3,122.7 632.8,123.6 633.3,122.7 633.8,123.6 634.3,123.4 634.8,121.4 635.3,122.3 635.8,122.5 636.3,121.6 636.8,121.2 637.3,121.6 637.8,122.1 638.3,122.1 638.8,121.6 639.3,122.2 639.8,122.3 640.3,122.1 640.8,123.4 641.3,122.5 641.8,121.3 642.3,122 642.8,122.4 643.3,122.3 643.8,121.6 644.3,121.9 644.8,122.3 645.3,122.6 645.8,122.5 646.3,121.4 646.8,121.2 647.3,121.5 647.8,122.1 648.3,122.7 648.8,122 649.3,121.8 649.8,121.7 650.3,123.1 650.8,123.9 651.3,122.3 651.8,122 652.3,122.4 652.8,123.4 653.3,122.9 653.8,122.2 654.3,122.4 654.8,122.6 655.3,122.2 655.8,122.1 656.3,122.4 656.8,123.1 657.3,122.6 657.8,121.7 658.3,122.5 658.8,123.1 659.3,123.2 659.8,122.5 660.3,122.3 660.8,122.9 661.3,122.1 661.8,122.1 662.3,122.5 662.8,122.6 663.3,123.8 663.8,123 664.3,121.9 664.8,122.3 665.3,122.4 665.8,122.9 666.3,123.6 666.8,122.4 667.3,121.3 667.8,121.8 668.3,122 668.8,122.4 669.3,123.4 669.8,122.9 670.3,121.7 670.8,121.5 671.3,122.2 671.8,122.6 672.3,122.3 672.8,122.1 673.3,122.6 673.8,122.8 674.3,122.6 674.8,123.2 675.3,122.3 675.8,121.8 676.3,122.3 676.8,121.9 677.3,122.3 677.8,122.1 678.3,121.6 678.8,123.3 679.3,124.6 679.8,123.8 680.3,122.4 680.8,121.6 681.3,121.6 681.8,121.8 682.3,122.3 682.8,122.7 683.3,122 683.8,122.2 684.3,122.9 684.8,122.9 685.3,122.8 685.8,122.6 686.3,121.9 686.8,121.9 687.3,122.3 687.8,121.6 688.3,122 688.8,122.2 689.3,120.9 689.8,121.7 690.3,122.7 690.8,121.9 691.3,122.1 691.8,121.9 692.3,121.9 692.8,122.2 693.3,122.2 693.8,121.5 694.3,121.4 694.8,122.6 695.3,122.9 695.8,122.2 696.3,122.8 696.8,122.6"/>
<polyline fill="none" stroke="#22ee22" stroke-width="1.9" stroke-linejoin="round" points="13.3,383.2 13.8,383.5 14.3,383.8 14.8,383.6 15.3,384.1 15.8,384.2 16.3,384.2 16.8,384.3 17.3,384.3 17.8,383.7 18.3,382.8 18.8,382.8 19.3,383.3 19.8,383.6 20.3,383.7 20.8,383.9 21.3,383.7 21.8,384.3 22.3,384.5 22.8,383.7 23.3,383.1 23.8,383.6 24.3,384.3 24.8,383.5 25.3,383.1 25.8,383.5 26.3,383 26.8,382.8 27.3,383.9 27.8,383.4 28.3,383.1 28.8,384.4 29.3,384 29.8,383.1 30.3,383.4 30.8,383.8 31.3,383.8 31.8,383.1 32.3,382.7 32.8,383.3 33.3,383.4 33.8,383.8 34.3,383.8 34.8,383.3 35.3,384 35.8,384.1 36.3,383.1 36.8,383.1 37.3,383.4 37.8,383.7 38.3,383.9 38.8,383.5 39.3,383.2 39.8,383.2 40.3,383.8 40.8,384.7 41.3,384.2 41.8,383.7 42.3,383.8 42.8,383.4 43.3,383.1 43.8,383.1 44.3,382.6 44.8,382.5 45.3,383.4 45.8,384 46.3,383.8 46.8,383.3 47.3,383.6 47.8,384.5 48.3,383.9 48.8,382.9 49.3,383.1 49.8,383.5 50.3,383.4 50.8,383.4 51.3,383.4 51.8,383.4 52.3,383.6 52.8,383.2 53.3,383.6 53.8,383.4 54.3,382.8 54.8,383.5 55.3,384 55.8,383.8 56.3,382.8 56.8,383 57.3,383.9 57.8,383.5 58.3,382.7 58.8,383.1 59.3,384.4 59.8,384.3 60.3,384.2 60.8,383.7 61.3,383.3 61.8,383.3 62.3,382.9 62.8,383 63.3,383.1 63.8,382.9 64.3,383 64.8,383.1 65.3,383.2 65.8,383.4 66.3,383.1 66.8,383.2 67.3,383 67.8,382.9 68.3,383.5 68.8,382.7 69.3,382.5 69.8,383.8 70.3,384.1 70.8,383.5 71.3,383.1 71.8,383.4 72.3,383.7 72.8,383.8 73.3,383.8 73.8,383.9 74.3,384 74.8,383.4 75.3,382.9 75.8,382.9 76.3,383.5 76.8,383.3 77.3,383.5 77.8,383.3 78.3,382.9 78.8,383.1 79.3,383.3 79.8,383.7 80.3,383.5 80.8,383 81.3,382.7 81.8,382.9 82.3,383.6 82.8,383.6 83.3,383.4 83.8,384 84.3,383.5 84.8,383 85.3,382.5 85.8,382.6 86.3,383.6 86.8,383.4 87.3,383.3"/>
<polyline fill="none" stroke="#20e422" stroke-width="1.5" points="91.4,318 92.3,301 94.4,283.7 96.9,265.3"/>
<polyline fill="none" stroke="#1bc01e" stroke-width="1.2" points="87.6,383.5 88.6,366 89.6,349 90.6,332 91.4,318 92.3,301"/>
<polyline fill="none" stroke="#22ee22" stroke-width="1.9" stroke-linejoin="round" points="96.9,265.3 99.4,253.5 101.9,247.6 104.5,245.4 104.8,245.9 105.1,246.1 105.4,246.4 105.7,246.8 106,247.4 106.3,247.9 106.6,248.2 106.9,248.4 107.2,248.9 107.5,249.4 107.8,249.8 108.1,250 108.4,250.2 108.7,250.7 109,251.3 109.3,251.6 109.6,251.7 109.9,251.9 110.2,252.1 110.5,252.3 110.8,252.7 111.1,252.9 111.4,253.1 111.7,253.5 112,254 112.3,254.4 112.6,254.8 112.9,255.2 113.2,255.6 113.5,256.1 113.8,256.6 114.1,256.9 114.4,257.2 114.7,257.7 115,258.2 115.3,258.9 115.6,259.4 115.9,259.9 116.2,260.3 116.5,260.9 116.8,261.4 117.1,262 117.4,262.5 117.7,262.8 118,263.1 118.3,263.6 118.6,264.4 118.9,264.9 119.2,265.5 119.5,266 119.8,266.5 120.1,266.8 120.4,267.2 120.7,267.7 121,268.6 121.3,269.3 121.6,269.7 121.9,269.6 122.2,269.6 122.5,269.8 122.8,269.8 123.1,269.6 123.4,269.7 123.7,269.9 124,270.1 124.3,270.2 124.6,270.4 124.9,270.3 125.2,270.3 125.5,270.2 125.8,270.8 126.1,271.4 126.4,271.9 126.7,272.4 127,272.9 127.3,273.7 127.6,274.2 127.9,274.7 128.2,275.2 128.5,275.9 128.8,276.4 129.1,276.9 129.4,277.3 129.7,277.7 130,278.1 130.3,278.8 130.6,279.6 130.9,280.2 131.2,280.7 131.5,281.2 131.8,281.7 132.1,282 132.4,282.6 132.7,283.4 133,283.9 133.3,284.4 133.6,285 133.9,285.5 134.2,285.9 134.5,286.5 134.8,287.2 135.1,287.8 135.4,288.2 135.7,288.7 136,289.3 136.3,289.3 136.6,289.5 136.9,289.7 137.2,289.9 137.5,289.7 137.8,289.9 138.1,290 138.4,289.8 138.7,289.6 139,289.7 139.3,289.7 139.6,289.6 139.9,289.9 140.2,290.6 140.5,291.2 140.8,291.7 141.1,292.1 141.4,292.8 141.7,293.2 142,293.7 142.3,294.3 142.6,295.1 142.9,295.7 143.2,296.2 143.5,296.5 143.8,296.9 144.1,297.4 144.4,298.1 144.7,298.4 145,298.8 145.3,299.6 145.6,300.5 145.9,301.1 146.2,301.5 146.5,301.9 146.8,302.4 147.1,303.1 147.4,303.6 147.7,304 148,304.6 148.3,305 148.6,304.8 148.9,304.8 149.2,305.1 149.5,305.1 149.8,305.1 150.1,305.1 150.4,305.1 150.7,304.9 151,304.8 151.3,304.8 151.6,304.8 151.9,304.7 152.2,305.2 152.5,305.9 152.8,306.5 153.1,307.1 153.4,308 153.7,308.7 154,309.1 154.3,309.3 154.6,309.9 154.9,310.6 155.2,311.1 155.5,311.9 155.8,312.8 156.1,313.6 156.4,314.1 156.7,314.7 157,315.3 157.3,315.9 157.6,316.4 157.9,316.8 158.2,317 158.5,316.9 158.8,316.9 159.1,316.9 159.4,316.8 159.7,316.9 160,316.7 160.3,316.6 160.6,316.6 160.9,316.8 161.2,316.6 161.5,316.4 161.8,317 162.1,317.6 162.4,318.1 162.7,318.5 163,319.1 163.3,319.8 163.6,320.7 163.9,321.1 164.2,321.7 164.5,322.2 164.8,322.7 165.1,323.1 165.4,323.8 165.7,324.5 166,325.4 166.3,326.1 166.6,326.8 166.9,327.3 167.2,327.7 167.5,328 167.8,328.5 168.1,329 168.4,329.2 168.7,329 169,328.6 169.3,328.5 169.6,328.5 169.9,328.1 170.2,327.6 170.5,327.4 170.8,327.1 171.1,326.8 171.4,326.7 171.7,327 172,327.5 172.3,327.6 172.6,328.1 172.9,328.7 173.2,329.4 173.5,329.7 173.8,330.1 174.1,330.6 174.4,331 174.7,331.3 175,332 175.3,332.4 175.6,332.8 175.9,333.2 176.2,333.7 176.5,334 176.8,334.6 177.1,334.5 177.4,334 177.7,333.6 178,333.3 178.3,332.8 178.6,332.5 178.9,332.4 179.2,332 179.5,331.3 179.8,330.9 180.1,331.1 180.4,331.6 180.7,332 181,332.4 181.3,332.6 181.6,333 181.9,333.6 182.2,334.4 182.5,334.9 182.8,335.2 183.1,335.5 183.4,336 183.7,336.5 184,337 184.3,337.4 184.6,338 184.9,338.6 185.2,339.1 185.5,338.5 185.8,338.1 186.1,337.7 186.4,337.4 186.7,336.8 187,336.3 187.3,336 187.6,335.9 187.9,335.6 188.2,335.2 188.5,335.6 188.8,335.8 189.1,336 189.4,336.4 189.7,337 190,337.7 190.3,338.1 190.6,338.5 190.9,339 191.2,339.6 191.5,340 191.8,340.4 192.1,340.9 192.4,341.4 192.7,341.6 193,342.1 193.3,342.3 193.6,342 193.9,341.5 194.2,340.9 194.5,340.5 194.8,340.4 195.1,340.3 195.4,339.7 195.7,339.2 196,338.9 196.3,339.3 196.6,339.7 196.9,340 197.2,340.4 197.5,341 197.8,341.8 198.1,342.3 198.4,342.7 198.7,343.2 199,343.4 199.3,343.8 199.6,344.1 199.9,344.8 200.2,345.2 200.5,345.5 200.8,345.8 201.1,346.3 201.4,346.1 201.7,345.9 202,345.6 202.3,345.3 202.6,344.9 202.9,344.4 203.2,344.1 203.5,343.9 203.8,343.4 204.1,343.1 204.4,343.4 204.7,343.9 205,344.3 205.3,344.8 205.6,345.1 205.9,345.4 206.2,346 206.5,346.5 206.8,346.9 207.1,347.1 207.4,347.4 207.7,347.7 208,348.2 208.3,348.6 208.6,348.5 208.9,348 209.2,347.6 209.5,347.3 209.8,347 210.1,346.7 210.4,346.3 210.7,346 211,345.6 211.3,345.5 211.6,345.8 211.9,346.2 212.2,346.7 212.5,347.1 212.8,347.4 213.1,348 213.4,348.3 213.7,348.7 214,349.2 214.3,349.9 214.6,350.5 214.9,350.6 215.2,350.8 215.5,351.2 215.8,351.7 216.1,352.2 216.4,351.9 216.7,351.7 217,351.4 217.3,350.9 217.6,350.4 217.9,350.1 218.2,350 218.5,349.6 218.8,349.1 219.1,349.1 219.4,349.5 219.7,350 220,350.6 220.3,351.2 220.6,351.8 220.9,352.3 221.2,352.6 221.5,353 221.8,353.5 222.1,353.9 222.4,354.6 222.7,355 223,355.5 223.3,356 223.6,356.5 223.9,355.9 224.2,355.3 224.5,354.9 224.8,354.7 225.1,354.3 225.4,354.1 225.7,353.7 226,353.3 226.3,352.8 226.6,352.8 226.9,353 227.2,353.3 227.5,353.8 227.8,354.4 228.1,354.9 228.4,355.2 228.7,355.5 229,356 229.3,356.8 229.6,357.3 229.9,357.6 230.2,357.9 230.5,358.4 230.8,359 231.1,359.6 231.4,359 231.7,358.2 232,357.7 232.3,357.4 232.6,357.1 232.9,356.6 233.2,356 233.5,355.3 233.8,354.6 234.1,354.7 234.4,355.4 234.7,355.9 235,356.6 235.3,356.9 235.6,357.3 235.9,357.7 236.2,358.5 236.5,358.9 236.8,359.2 237.1,359.6 237.4,359.9 237.7,360.3 238,360.8 238.3,360.5 238.6,360 238.9,359.6 239.2,359.1 239.5,358.6 239.8,358.2 240.1,357.8 240.4,357.1 240.7,356.6 241,356.7 241.3,357.3 241.6,357.7 241.9,358.2 242.2,358.5 242.5,358.8 242.8,359.1 243.1,359.6 243.4,360.1 243.7,360.5 244,360.9 244.3,361.1 244.6,361.4 244.9,361.9 245.2,362.4 245.5,362.2 245.8,361.9 246.1,361.4 246.4,360.7 246.7,360.1 247,359.8 247.3,359.3 247.6,358.7 247.9,357.8 248.2,357.9 248.5,358.6 248.8,359.1 249.1,359.6 249.4,360 249.7,360.7 250,361.2 250.3,361.6 250.6,362.2 250.9,362.5 251.2,362.9 251.5,363.3 251.8,363.1 252.1,362.5 252.4,362.1 252.7,361.9 253,361.5 253.3,361.1 253.6,360.4 253.9,360 254.2,359.4 254.5,359.3 254.8,359.9 255.1,360.5 255.4,360.9 255.7,360.9 256,361.2 256.3,361.6 256.6,362.1 256.9,362.4 257.2,362.6 257.5,363 257.8,363.2 258.1,363.5 258.4,363.8 258.7,363.4 259,363 259.3,362.7 259.6,362.4 259.9,361.8 260.2,361 260.5,360.3 260.8,359.8 261.1,359.5 261.4,360.2 261.7,360.5 262,360.5 262.3,360.8 262.6,361.1 262.9,361.6 263.2,361.7 263.5,362.3 263.8,362.7 264.1,363.3 264.4,363.5 264.7,363.9 265,364.5 265.3,364.7 265.6,364.4 265.9,363.9 266.2,363.2 266.5,362.6 266.8,362.5 267.1,362.1 267.4,361.4 267.7,360.6 268,360.2 268.3,360.8 268.6,361.2 268.9,361.6 269.2,361.8 269.5,362.4 269.8,362.9 270.1,363.5 270.4,363.9 270.7,364.4 271,364.7 271.3,365.1 271.6,365.5 271.9,366.2 272.2,366.6 272.5,366.1 272.8,365.7 273.1,365.4 273.4,364.9 273.7,364.3 274,363.7 274.3,363.3 274.6,362.8 274.9,362.2 275.2,362.3 275.5,362.7 275.8,363.3 276.1,364 276.4,364.8 276.7,365.1 277,365.4 277.3,366 277.6,366.7 277.9,367.3 278.2,367.8 278.5,368.4 278.8,368.9 279.1,368.5 279.4,367.8 279.7,367.6 280,367.3 280.3,366.8 280.6,366.2 280.9,365.5 281.2,364.6 281.5,363.7 281.8,363.6 282.1,364.5 282.4,365.2 282.7,365.7 283,366.1 283.3,366.6 283.6,367.2 283.9,367.6 284.2,368 284.5,368.4 284.8,368.9 285.1,369.3 285.4,369.8 285.7,369.5 286,369.1 286.3,368.3 286.6,367.5 286.9,367.2 287.2,366.8 287.5,366.3 287.8,365.6 288.1,364.6 288.4,364.5 288.7,365.3 289,366.2 289.3,366.5 289.6,366.8 289.9,367.5 290.2,368.1 290.5,368.6 290.8,369.1 291.1,369.9 291.4,370.5 291.7,370.9 292,370.9 292.3,370.4 292.6,369.8 292.9,369 293.2,368.4 293.5,367.7 293.8,367.3 294.1,366.6 294.4,366 294.7,365.2 295,365.9 295.3,366.3 295.6,366.9 295.9,367.5 296.2,368 296.5,368.5 296.8,369.2 297.1,369.7 297.4,370.3 297.7,370.8 298,371.5 298.3,371.2 298.6,370.6 298.9,369.8 299.2,369.1 299.5,368.6 299.8,367.9 300.1,367.3 300.4,366.6 300.7,366 301,365.6 301.3,366.2 301.6,366.5 301.9,366.8 302.2,367.1 302.5,367.7 302.8,368.1 303.1,368.6 303.4,369.2 303.7,369.7 304,370.2 304.3,371.1 304.6,371.6 304.9,372 305.2,371.3 305.5,370.7 305.8,369.9 306.1,369 306.4,368.1 306.7,367.6 307,367.2 307.3,366.7 307.6,365.9 307.9,366.1 308.2,366.8 308.5,367.3 308.8,367.7 309.1,368.2 309.4,368.8 309.7,369.3 310,369.9 310.3,370.8 310.6,371.6 310.9,372 311.2,371.9 311.5,371.2 311.8,370.5 312.1,369.7 312.4,369 312.7,368.3 313,367.7 313.3,367.2 313.6,366.6 313.9,365.9 314.2,366.4 314.5,366.9 314.8,367.3 315.1,367.9 315.4,368.4 315.7,369 316,369.3 316.3,369.9 316.6,370.6 316.9,371.5 317.2,371.6 317.5,370.7 317.8,370.2 318.1,369.7 318.4,369.3 318.7,368.4 319,367.8 319.3,367.1 319.6,366.5 319.9,365.7 320.2,366.3 320.5,367.1 320.8,367.4 321.1,367.6 321.4,368.1 321.7,368.8 322,369.3 322.3,369.6 322.6,370.1 322.9,370.5 323.2,371 323.5,371.6 323.8,372.1 324.1,372.4 324.4,371.7 324.7,371.2 325,370.6 325.3,370.2 325.6,369.7 325.9,368.9 326.2,367.8 326.5,366.9 326.8,366.4 327.1,367.2 327.4,367.8 327.7,368.2 328,368.7 328.3,369.3 328.6,370.1 328.9,370.7 329.2,371.4 329.5,372 329.8,372.7 330.1,372.9 330.4,373.2 330.7,373.7 331,373.4 331.3,372.6 331.6,372.1 331.9,371.6 332.2,371.1 332.5,370.4 332.8,369.7 333.1,369 333.4,368.2 333.7,368 334,368.8 334.3,369.6 334.6,370.3 334.9,370.8 335.2,371 335.5,371.3 335.8,371.8 336.1,372.8 336.4,373.4 336.7,374 337,374.3 337.3,374.8 337.6,374 337.9,373.6 338.2,373.2 338.5,372.5 338.8,371.7 339.1,370.8 339.4,369.8 339.7,369.2 340,369 340.3,369.5 340.6,369.9 340.9,370.1 341.2,370.5 341.5,371 341.8,371.5 342.1,372.5 342.4,373.2 342.7,373.9 343,374.2 343.3,374.7 343.6,375.1 343.9,374.9 344.2,374.3 344.5,373.6 344.8,372.6 345.1,372 345.4,371.3 345.7,370.7 346,370.1 346.3,369.7 346.6,369.6 346.9,369.9 347.2,370.3 347.5,370.7 347.8,371.3 348.1,372 348.4,372.6 348.7,373 349,373.5 349.3,374.1 349.6,374.8 349.9,375.7 350.2,375.5 350.5,374.8 350.8,374 351.1,373.3 351.4,372.6 351.7,371.6 352,370.7 352.3,370.1 352.6,369.5 352.9,369.3 353.2,369.8 353.5,370.5 353.8,371.2 354.1,371.8 354.4,372.1 354.7,372.5 355,373.1 355.3,373.8 355.6,374.3 355.9,374.9 356.2,375.7 356.5,375.7 356.8,374.9 357.1,374.1 357.4,373.3 357.7,372.5 358,371.9 358.3,371.3 358.6,370.4 358.9,369.5 359.2,369.1 359.5,369.7 359.8,370.4 360.1,370.8 360.4,371.3 360.7,371.9 361,372.7 361.3,373.1 361.6,373.7 361.9,374.3 362.2,375 362.5,375.5 362.8,375.5 363.1,374.8 363.4,374.1 363.7,373.4 364,372.7 364.3,372 364.6,371.4 364.9,370.8 365.2,370.2 365.5,369.9 365.8,370.3 366.1,370.8 366.4,371 366.7,371.5 367,372.2 367.3,373.1 367.6,373.7 367.9,374.2 368.2,374.6 368.5,374.9 368.8,375.1 369.1,375.2 369.4,374.6 369.7,373.9 370,373 370.3,372.4 370.6,372.1 370.9,371.8 371.2,371.3 371.5,370.7 371.8,370.1 372.1,370.7 372.4,371.2 372.7,371.7 373,371.9 373.3,372.4 373.6,372.8 373.9,373.2 374.2,373.8 374.5,374.4 374.8,375 375.1,375.6 375.4,375.7 375.7,375 376,374.4 376.3,373.7 376.6,373.1 376.9,372.3 377.2,371.6 377.5,371.1 377.8,370.6 378.1,370.1 378.4,370.7 378.7,371.3 379,371.6 379.3,372.1 379.6,372.8 379.9,373.6 380.2,373.8 380.5,374.1 380.8,374.5 381.1,375.2 381.4,375.5 381.7,375.7 382,375.2 382.3,374.5 382.6,373.9 382.9,373.3 383.2,372.8 383.5,372.1 383.8,371.5 384.1,370.6 384.4,370.1 384.7,370.7 385,371.3 385.3,371.8 385.6,372.4 385.9,372.8 386.2,373 386.5,373.5 386.8,374.2 387.1,374.7 387.4,375.2 387.7,375.7 388,375.8 388.3,375.1 388.6,374.4 388.9,373.7 389.2,373.1 389.5,372.6 389.8,372 390.1,371.3 390.4,370.6 390.7,370.2 391,370.9 391.3,371.4 391.6,371.9 391.9,372.4 392.2,372.7 392.5,373 392.8,373.6 393.1,374.2 393.4,374.8 393.7,375.2 394,375.9 394.3,376 394.6,375.5 394.9,374.8 395.2,374.1 395.5,373.3 395.8,372.4 396.1,371.8 396.4,371.4 396.7,371 397,370.3 397.3,370.7 397.6,371.4 397.9,372.1 398.2,372.3 398.5,372.5 398.8,372.9 399.1,373.5 399.4,374.2 399.7,375 400,375.9 400.3,376.5 400.6,376.4 400.9,375.7 401.2,375 401.5,374.1 401.8,373.4 402.1,373 402.4,372.2 402.7,371.3 403,370.6 403.3,370.4 403.6,370.9 403.9,371.4 404.2,371.9 404.5,372.3 404.8,373.1 405.1,373.7 405.4,374.2 405.7,374.6 406,375.2 406.3,375.9 406.6,376.7 406.9,376.5 407.2,375.6 407.5,374.6 407.8,374 408.1,373.4 408.4,373 408.7,372.3 409,371.5 409.3,370.7 409.6,370.2 409.9,370.8 410.2,371.6 410.5,372.2 410.8,372.7 411.1,373.2 411.4,373.7 411.7,374.1 412,374.5 412.3,375 412.6,375.8 412.9,376.6 413.2,376.3 413.5,375.6 413.8,374.9 414.1,374.1 414.4,373.4 414.7,372.7 415,372 415.3,371.3 415.6,370.6 415.9,370.6 416.2,371.3 416.5,371.8 416.8,372.3 417.1,372.7 417.4,373.1 417.7,373.5 418,374.2 418.3,374.9 418.6,375.3 418.9,376 419.2,376.7 419.5,376.1 419.8,375.2 420.1,374.6 420.4,374.1 420.7,373.3 421,372.7 421.3,372.4 421.6,371.7 421.9,370.8 422.2,370.9 422.5,371.5 422.8,371.9 423.1,372.3 423.4,372.9 423.7,373.7 424,374.4 424.3,374.7 424.6,375.2 424.9,375.8 425.2,376.2 425.5,376.3 425.8,375.6 426.1,375.2 426.4,374.7 426.7,374.2 427,373.6 427.3,372.7 427.6,371.9 427.9,371.2 428.2,370.7 428.5,371 428.8,371.6 429.1,372 429.4,372.5 429.7,373.1 430,373.7 430.3,374.5 430.6,375 430.9,375.5 431.2,375.9 431.5,376.4 431.8,376.6 432.1,375.8 432.4,375.2 432.7,374.4 433,373.8 433.3,372.9 433.6,372.2 433.9,371.6 434.2,371.3 434.5,370.9 434.8,371.3 435.1,371.7 435.4,372.2 435.7,372.9 436,373.4 436.3,373.6 436.6,373.9 436.9,374.6 437.2,375.2 437.5,375.6 437.8,376.2 438.1,376.5 438.4,376.2 438.7,375.4 439,374.6 439.3,373.8 439.6,373 439.9,372.2 440.2,371.6 440.5,371 440.8,370.6 441.1,371.1 441.4,371.7 441.7,372.2 442,372.7 442.3,373.4 442.6,374.2 442.9,374.7 443.2,375.1 443.5,375.7 443.8,376.3 444.1,376.9 444.4,376.4 444.7,375.5 445,374.9 445.3,374.3 445.6,373.6 445.9,372.9 446.2,372.1 446.5,371.3 446.8,370.5 447.1,370.4 447.4,371 447.7,371.6 448,372.4 448.3,372.9 448.6,373.6 448.9,374.2 449.2,374.9 449.5,375.5 449.8,376.2 450.1,376.6 450.4,377.1 450.7,376.5 451,375.7 451.3,374.7 451.6,374.2 451.9,373.6 452.2,372.8 452.5,371.8 452.8,371.3 453.1,370.7 453.4,371.2 453.7,371.6 454,372 454.3,372.8 454.6,373.5 454.9,374.1 455.2,374.7 455.5,375.5 455.8,376.1 456.1,376.7 456.4,377.3 456.7,377.2 457,376.3 457.3,375.6 457.6,374.9 457.9,374 458.2,373 458.5,372.3 458.8,371.6 459.1,370.8 459.4,370 459.7,370.5 460,371.2 460.3,372 460.6,372.9 460.9,373.8 461.2,374.5 461.5,375.1 461.8,375.7 462.1,376.2 462.4,376.9 462.7,377.5 463,377.2 463.3,376.3 463.6,375.4 463.9,374.4 464.2,373.7 464.5,373 464.8,372.2 465.1,371.5 465.4,370.4 465.7,370.2 466,370.9 466.3,371.8 466.6,372.5 466.9,373 467.2,373.6 467.5,374.4 467.8,375.2 468.1,375.8 468.4,376.5 468.7,377.3 469,378 469.3,377.1 469.6,376.4 469.9,375.3 470.2,374.5 470.5,373.5 470.8,372.8 471.1,371.9 471.4,371.1 471.7,370.3 472,370.8 472.3,371.4 472.6,372 472.9,372.7 473.2,373.4 473.5,374.3 473.8,375 474.1,375.5 474.4,376.2 474.7,376.8 475,377.4 475.3,377.2 475.6,376.5 475.9,375.8 476.2,375.2 476.5,374.3 476.8,373.5 477.1,372.6 477.4,372 477.7,371.1 478,370.7 478.3,371.5 478.6,372.5 478.9,373.1 479.2,373.6 479.5,373.8 479.8,374.4 480.1,375.1 480.4,375.6 480.7,375.9 481,376.5 481.3,377.4 481.6,376.7 481.9,375.8 482.2,375 482.5,374.5 482.8,374 483.1,373.4 483.4,372.6 483.7,371.8 484,371 484.3,371.3 484.6,371.8 484.9,372.4 485.2,373 485.5,373.8 485.8,374 486.1,374.4 486.4,375 486.7,375.7 487,376.2 487.3,376.8 487.6,377.1 487.9,376.4 488.2,375.7 488.5,374.9 488.8,374.4 489.1,373.6 489.4,372.9 489.7,371.9 490,371.2 490.3,370.7 490.6,371.6 490.9,372.2 491.2,372.7 491.5,373.2 491.8,373.9 492.1,374.2 492.4,374.7 492.7,375.3 493,376 493.3,376.5 493.6,376.9 493.9,376.6 494.2,376.1 494.5,375.5 494.8,374.6 495.1,373.8 495.4,373 495.7,372.3 496,371.8 496.3,371.3 496.6,371.4 496.9,371.7 497.2,372.1 497.5,372.5 497.8,373.2 498.1,373.9 498.4,374.9 498.7,375.6 499,376.1 499.3,376.3 499.6,376.8 499.9,377.2 500.2,376.6 500.5,375.9 500.8,375.1 501.1,374.4 501.4,373.9 501.7,373.2 502,372.5 502.3,371.7 502.6,371.2 502.9,371.4 503.2,371.7 503.5,372.5 503.8,373.4 504.1,374.1 504.4,374.6 504.7,375.3 505,376.1 505.3,376.6 505.6,377.1 505.9,377.5 506.2,377.1 506.5,376.4 506.8,375.7 507.1,374.8 507.4,373.9 507.7,373 508,372.2 508.3,371.7 508.6,371.1 508.9,371.4 509.2,371.9 509.5,372.4 509.8,372.7 510.1,373.4 510.4,374 510.7,374.7 511,375.3 511.3,376 511.6,376.5 511.9,376.9 512.2,377.2 512.5,376.8 512.8,376.3 513.1,375.6 513.4,374.6 513.7,373.8 514,373.1 514.3,372.4 514.6,371.4 514.9,370.8 515.2,371.3 515.5,371.9 515.8,372.5 516.1,373.2 516.4,373.8 516.7,374.3 517,374.9 517.3,375.8 517.6,376.5 517.9,377 518.2,377.3 518.5,377 518.8,376.5 519.1,376.1 519.4,375.2 519.7,374.1 520,373.2 520.3,372.6 520.6,371.9 520.9,371.1 521.2,371.2 521.5,371.6 521.8,372.2 522.1,372.9 522.4,373.8 522.7,374.3 523,374.7 523.3,375.2 523.6,375.6 523.9,376.2 524.2,376.7 524.5,376.7 524.8,376 525.1,375.4 525.4,375.1 525.7,374.5 526,374 526.3,373.3 526.6,372.7 526.9,371.9 527.2,371.4 527.5,372.1 527.8,372.8 528.1,373.1 528.4,373.3 528.7,373.9 529,374.5 529.3,375 529.6,375.7 529.9,376.3 530.2,376.9 530.5,377.3 530.8,376.8 531.1,376.3 531.4,375.6 531.7,375 532,374 532.3,373.2 532.6,372.6 532.9,372.2 533.2,371.6 533.5,371.7 533.8,372.3 534.1,372.6 534.4,373.3 534.7,374 535,374.8 535.3,375 535.6,375.3 535.9,376 536.2,376.7 536.5,377 536.8,376.6 537.1,375.9 537.4,375.4 537.7,374.8 538,374.1 538.3,373.5 538.6,373 538.9,372.4 539.2,371.8 539.5,371.8 539.8,372.2 540.1,372.7 540.4,373 540.7,373.7 541,374.2 541.3,375 541.6,375.3 541.9,375.7 542.2,376.2 542.5,376.9 542.8,377.3 543.1,376.5 543.4,375.8 543.7,375.1 544,374.6 544.3,374.1 544.6,373.7 544.9,373.2 545.2,372.3 545.5,371.6 545.8,372.1 546.1,372.8 546.4,373.1 546.7,373.3 547,373.6 547.3,374.2 547.6,375.2 547.9,375.8 548.2,376 548.5,376.3 548.8,376.8 549.1,376.6 549.4,375.9 549.7,375.4 550,375 550.3,374.4 550.6,373.6 550.9,372.9 551.2,372.3 551.5,371.8 551.8,371.7 552.1,372.3 552.4,372.7 552.7,373.3 553,373.8 553.3,374.3 553.6,374.9 553.9,375.5 554.2,376.1 554.5,376.3 554.8,376.5 555.1,376.7 555.4,376.3 555.7,375.8 556,375.1 556.3,374.4 556.6,373.9 556.9,373.2 557.2,372.6 557.5,371.9 557.8,371.5 558.1,372 558.4,372.4 558.7,372.6 559,373.2 559.3,374.1 559.6,374.9 559.9,375.5 560.2,375.9 560.5,376.5 560.8,377.1 561.1,377.4 561.4,376.7 561.7,376.1 562,375.7 562.3,375.1 562.6,374.5 562.9,373.8 563.2,372.8 563.5,371.8 563.8,371.2 564.1,371.9 564.4,372.7 564.7,372.9 565,373.1 565.3,373.7 565.6,374.5 565.9,375.2 566.2,375.4 566.5,376.1 566.8,377 567.1,377.9 567.4,377.5 567.7,376.6 568,375.7 568.3,375.2 568.6,374.7 568.9,374.1 569.2,373.1 569.5,372.3 569.8,371.4 570.1,371.5 570.4,372.3 570.7,373 571,373.3 571.3,373.7 571.6,374.2 571.9,374.9 572.2,375.5 572.5,376.1 572.8,377 573.1,377.7 573.4,378 573.7,376.9 574,376 574.3,375.4 574.6,374.7 574.9,373.8 575.2,373 575.5,372.2 575.8,371.3 576.1,370.6 576.4,371.6 576.7,372.2 577,372.7 577.3,373.2 577.6,374.1 577.9,375 578.2,375.6 578.5,376.1 578.8,376.7 579.1,377.2 579.4,377.8 579.7,377.2 580,376.5 580.3,375.7 580.6,374.7 580.9,374.1 581.2,373.4 581.5,372.7 581.8,371.8 582.1,371.3 582.4,371.8 582.7,372.3 583,372.7 583.3,373.3 583.6,374 583.9,374.6 584.2,375.3 584.5,375.8 584.8,376.6 585.1,377.1 585.4,377.9 585.7,377.4 586,376.7 586.3,376.1 586.6,375.2 586.9,374.3 587.2,373.4 587.5,372.7 587.8,371.8 588.1,371.2 588.4,371.3 588.7,371.9 589,372.2 589.3,372.8 589.6,373.6 589.9,374.5 590.2,375.1 590.5,375.7 590.8,376.3 591.1,376.9 591.4,377.4 591.7,377.3 592,376.6 592.3,375.6 592.6,374.9 592.9,374.3 593.2,373.8 593.5,373.2 593.8,372.4 594.1,371.7 594.4,371.2 594.7,371.7 595,372.2 595.3,373 595.6,373.9 595.9,374.6 596.2,375.3 596.5,375.7 596.8,376.1 597.1,376.5 597.4,377.2 597.7,377.7 598,377.1 598.3,376.5 598.6,375.8 598.9,374.9 599.2,374 599.5,373.2 599.8,372.5 600.1,371.6 600.4,370.8 600.7,371.5 601,372.4 601.3,373.1 601.6,373.7 601.9,374.2 602.2,374.7 602.5,375.3 602.8,376 603.1,376.6 603.4,377.2 603.7,377.8 604,377.2 604.3,376.3 604.6,375.5 604.9,374.8 605.2,374.3 605.5,373.7 605.8,372.8 606.1,372.1 606.4,371.6 606.7,372 607,372.6 607.3,373.1 607.6,373.6 607.9,374.1 608.2,374.8 608.5,375.4 608.8,376 609.1,376.4 609.4,376.9 609.7,377.5 610,377.3 610.3,376.7 610.6,376 610.9,375.3 611.2,374.5 611.5,373.6 611.8,372.7 612.1,371.9 612.4,371.3 612.7,371.3 613,372 613.3,372.8 613.6,373.6 613.9,374.1 614.2,374.7 614.5,375.3 614.8,375.8 615.1,376.2 615.4,377 615.7,377.8 616,377.9 616.3,377 616.6,376.4 616.9,375.6 617.2,375 617.5,374.1 617.8,372.9 618.1,372.1 618.4,371.7 618.7,371.5 619,372.1 619.3,372.6 619.6,373.1 619.9,373.6 620.2,374.3 620.5,375 620.8,375.6 621.1,376.2 621.4,376.8 621.7,377.6 622,378 622.3,377.1 622.6,376.3 622.9,375.6 623.2,375 623.5,374.5 623.8,373.6 624.1,372.2 624.4,371.1 624.7,370.6 625,371.5 625.3,372.3 625.6,372.9 625.9,373.5 626.2,374.1 626.5,375.1 626.8,375.8 627.1,376.4 627.4,377 627.7,377.8 628,378.3 628.3,377.4 628.6,376.6 628.9,375.8 629.2,374.9 629.5,374 629.8,373.2 630.1,372.6 630.4,371.8 630.7,371 631,371.5 631.3,371.9 631.6,372.3 631.9,373.2 632.2,374.2 632.5,375.1 632.8,375.8 633.1,376.4 633.4,376.9 633.7,377.7 634,378.5 634.3,377.9 634.6,376.8 634.9,375.9 635.2,375.2 635.5,374.5 635.8,373.8 636.1,372.9 636.4,372 636.7,371.1 637,371.5 637.3,372.1 637.6,372.7 637.9,373.4 638.2,374.1 638.5,374.8 638.8,375.6 639.1,376.4 639.4,377.2 639.7,377.7 640,378.3 640.3,377.9 640.6,376.8 640.9,375.9 641.2,375 641.5,374.3 641.8,373.5 642.1,373 642.4,372.4 642.7,371.6 643,371.9 643.3,372.6 643.6,373 643.9,373.5 644.2,374.1 644.5,374.5 644.8,375.2 645.1,375.8 645.4,376.3 645.7,376.9 646,377.8 646.3,377.6 646.6,376.8 646.9,376.1 647.2,375.5 647.5,374.9 647.8,374.1 648.1,373.4 648.4,372.5 648.7,371.6 649,371.5 649.3,372.3 649.6,372.9 649.9,373.3 650.2,373.8 650.5,374.3 650.8,374.9 651.1,375.8 651.4,376.4 651.7,377.1 652,377.4 652.3,377.4 652.6,376.5 652.9,376 653.2,375.4 653.5,374.7 653.8,374.2 654.1,373.7 654.4,373 654.7,372 655,371.4 655.3,372 655.6,372.6 655.9,373.3 656.2,373.7 656.5,374.4 656.8,375.2 657.1,376 657.4,376.4 657.7,376.7 658,377.2 658.3,377.3 658.6,376.7 658.9,376.1 659.2,375.4 659.5,374.8 659.8,374.1 660.1,373.6 660.4,373 660.7,372.3 661,371.9 661.3,372.3 661.6,372.7 661.9,373.3 662.2,373.8 662.5,374.5 662.8,375.2 663.1,375.6 663.4,376 663.7,376.5 664,377.2 664.3,377.6 664.6,377 664.9,376.1 665.2,375.4 665.5,374.7 665.8,373.9 666.1,373.4 666.4,372.9 666.7,372.3 667,371.9 667.3,372.5 667.6,373.4 667.9,374.1 668.2,374.7 668.5,374.9 668.8,375.1 669.1,375.8 669.4,376.4 669.7,376.6 670,376.9 670.3,377.3 670.6,376.9 670.9,376.1 671.2,375.6 671.5,375.1 671.8,374.7 672.1,373.9 672.4,373.3 672.7,372.7 673,372.1 673.3,372.8 673.6,373.2 673.9,373.5 674.2,373.8 674.5,374.5 674.8,375.2 675.1,375.8 675.4,376.1 675.7,376.5 676,377.2 676.3,377.7 676.6,377.2 676.9,376.5 677.2,375.8 677.5,374.9 677.8,374.3 678.1,373.7 678.4,373.1 678.7,372.4 679,371.6 679.3,372.2 679.6,372.8 679.9,373.4 680.2,373.9 680.5,374.6 680.8,375.3 681.1,375.9 681.4,376.3 681.7,376.8 682,377.3 682.3,377.8 682.6,377 682.9,376.3 683.2,375.7 683.5,375.2 683.8,374.5 684.1,373.8 684.4,373.1 684.7,372.5 685,371.5 685.3,371.9 685.6,372.2 685.9,373 686.2,373.6 686.5,374.3 686.8,375.1 687.1,375.9 687.4,376.4 687.7,376.9 688,377.4 688.3,378.1 688.6,377.4 688.9,376.8 689.2,376 689.5,375.3 689.8,374.7 690.1,374 690.4,373.2 690.7,372.4 691,371.7 691.3,372.1 691.6,372.6 691.9,373.1 692.2,373.9 692.5,374.5 692.8,375.4 693.1,375.7 693.4,376.1 693.7,376.2 694,377.1 694.3,377.9 694.6,377.4 694.9,376.6 695.2,375.9 695.5,375.1 695.8,374.5 696.1,373.9 696.4,373.4 696.7,372.6"/>
<!-- trigger position marker -->
<polygon points="91.2,1.2 98.2,1.2 94.7,7.8" fill="#f87c6c"/>
<!-- trigger level arrow -->
<polygon points="683,275.8 688.6,273 688.6,278.6" fill="#22ee22"/>
<rect x="688" y="275.1" width="8" height="1.5" fill="#22ee22"/>
<!-- channel markers -->
<g>
<polygon points="15,88.3 24.5,91.5 15,94.7" fill="#ecec22"/>
<circle cx="9.5" cy="91.5" r="5.4" fill="#ecec22"/>
<text x="9.5" y="94.1" font-size="7.5" text-anchor="middle" fill="#222">1</text>
<polygon points="15,171.3 24.5,174.5 15,177.7" fill="#1fe4ea"/>
<circle cx="9.3" cy="174.5" r="5.4" fill="#1fe4ea"/>
<text x="9.3" y="177.1" font-size="7.5" text-anchor="middle" fill="#123">2</text>
<polygon points="16,380.6 23.5,383.6 16,386.6" fill="#22ee22"/>
<circle cx="9.7" cy="383.6" r="6.6" fill="#f0c040"/>
<circle cx="9.7" cy="383.6" r="5.6" fill="#22ee22"/>
<text x="9.7" y="386.2" font-size="7.5" text-anchor="middle" fill="#063">4</text>
</g>
<!-- cursor markers -->
<circle cx="21" cy="235.9" r="4" fill="url(#cm)"/>
<text x="21" y="237.9" font-size="6" font-weight="bold" text-anchor="middle" fill="#3a2600">a</text>
<circle cx="21" cy="376.9" r="4" fill="url(#cm)"/>
<text x="21" y="379.1" font-size="6" font-weight="bold" text-anchor="middle" fill="#3a2600">b</text>
<!-- labels -->
<text x="22" y="78.2" font-size="7.7" fill="#eeee22" stroke="#eeee22" stroke-width="0.25" textLength="47.8" lengthAdjust="spacingAndGlyphs">MP6522 OUT1</text>
<text x="23.5" y="164.9" font-size="7.7" fill="#1edde4" stroke="#1edde4" stroke-width="0.2" textLength="48.8" lengthAdjust="spacingAndGlyphs">MP6522 OUT2</text>
<text x="24.4" y="373.4" font-size="7.7" fill="#22ea22" stroke="#22ea22" stroke-width="0.2" textLength="44.5" lengthAdjust="spacingAndGlyphs">Motor Current</text>

<!-- ============ bottom panels ============ -->
<g fill="none" stroke="#8c8c8c" stroke-width="1.1">
<rect x="15.6" y="436" width="192.4" height="47.6" rx="4.5"/>
<rect x="210.6" y="436" width="93.6" height="47.6" rx="4.5"/>
<rect x="405.4" y="436" width="127.6" height="16.6" rx="4.5"/>
<rect x="536" y="436" width="156.6" height="62.2" rx="4.5"/>
<rect x="242.2" y="440.4" width="58.2" height="43.2"/>
<line x1="242.2" y1="454.6" x2="300.4" y2="454.6"/>
<line x1="242.2" y1="468.9" x2="300.4" y2="468.9"/>
</g>
<!-- badges -->
<rect x="21.7" y="442.1" width="22" height="7.6" rx="3.8" fill="url(#gy)"/>
<rect x="21.7" y="455.9" width="22" height="7.6" rx="3.8" fill="url(#gc)"/>
<rect x="21.7" y="470.2" width="22" height="7.6" rx="3.8" fill="url(#gg)"/>
<g font-size="6.2" font-weight="bold" text-anchor="middle" fill="#000" stroke="#000" stroke-width="0.2">
<text x="32.2" y="448.1">C1</text><text x="32.2" y="462.1">C2</text><text x="32.2" y="476.2">C4</text>
</g>
<g class="b">
<text x="48" y="447.9">10.0V/div</text>
<text x="48" y="462">10.0V/div</text>
<text x="48" y="476.2">1.0A/div</text>
<text x="126.3" y="447.9">1MΩ</text><text x="126.3" y="462">1MΩ</text><text x="126.3" y="476.2">1MΩ</text>
<text x="148.3" y="445.4" font-size="5">B</text><text x="151.8" y="449.6" font-size="8.2">W</text><text x="159" y="447.9">:20.0M</text>
<text x="148.3" y="459.5" font-size="5">B</text><text x="151.8" y="463.7" font-size="8.2">W</text><text x="159" y="462">:20.0M</text>
<text x="148.3" y="473.7" font-size="5">B</text><text x="151.8" y="477.9" font-size="8.2">W</text><text x="159" y="476.2">:20.0M</text>
</g>
<rect x="216.4" y="442.6" width="23.6" height="8.3" rx="4.1" fill="url(#gg)"/>
<rect x="216.4" y="457" width="23.6" height="8.3" rx="4.1" fill="url(#gg)"/>
<rect x="216.4" y="470.8" width="23.6" height="8.5" rx="4.2" fill="url(#gg)"/>
<g font-size="6.6" font-weight="bold" text-anchor="middle" fill="#021002" stroke="#021002" stroke-width="0.15">
<text x="227.9" y="449">V1</text><text x="227.9" y="463.4">V2</text><text x="227.9" y="477.4">ΔV</text>
</g>
<g class="b" font-size="8.6">
<text x="243.7" y="450">3.3A</text><text x="243.7" y="464.2">0.0A</text><text x="243.7" y="478.4">-3.3A</text>
</g>
<!-- trigger panel -->
<rect x="409.8" y="440.6" width="10" height="10" fill="#dfe6f4" stroke="#f0a030" stroke-width="0.8"/>
<text x="414.8" y="448.4" font-size="7.5" font-weight="bold" text-anchor="middle" fill="#0c1228" stroke="#0c1228" stroke-width="0.2">A'</text>
<rect x="422.2" y="441.2" width="21.9" height="8.3" rx="4.1" fill="url(#gg)"/>
<text x="433.1" y="447.6" font-size="6.4" font-weight="bold" text-anchor="middle" fill="#021002" stroke="#021002" stroke-width="0.15">C4</text>
<path d="M446.6 449.6 H448.4 C450.4 449.6 451.4 441.5 453.2 441.5 H455.2" fill="none" stroke="#fff" stroke-width="1.3"/>
<g class="b">
<text x="457.5" y="447.9">2.52A</text>
<text x="540.8" y="447.9">20.0ms</text><text x="575" y="447.9">20.0kS/s</text><text x="640.3" y="447.9">50.0µs/pt</text>
<text x="540.8" y="462.1" fill="#1ee01e">Run</text><text x="582" y="462.1">Sample</text>
<text x="540.8" y="476.5">9 acqs</text><text x="636.7" y="476.5">RL:4.0k</text>
<text x="540.8" y="490.8">Auto</text><text x="570" y="490.8">April 15, 2021</text><text x="655.8" y="490.8" fill="#f09418">10:37:21</text>
</g>
<rect x="13.2" y="498.6" width="689" height="7" fill="#3c3c3c"/>
</g>
</svg>
</body></html>
